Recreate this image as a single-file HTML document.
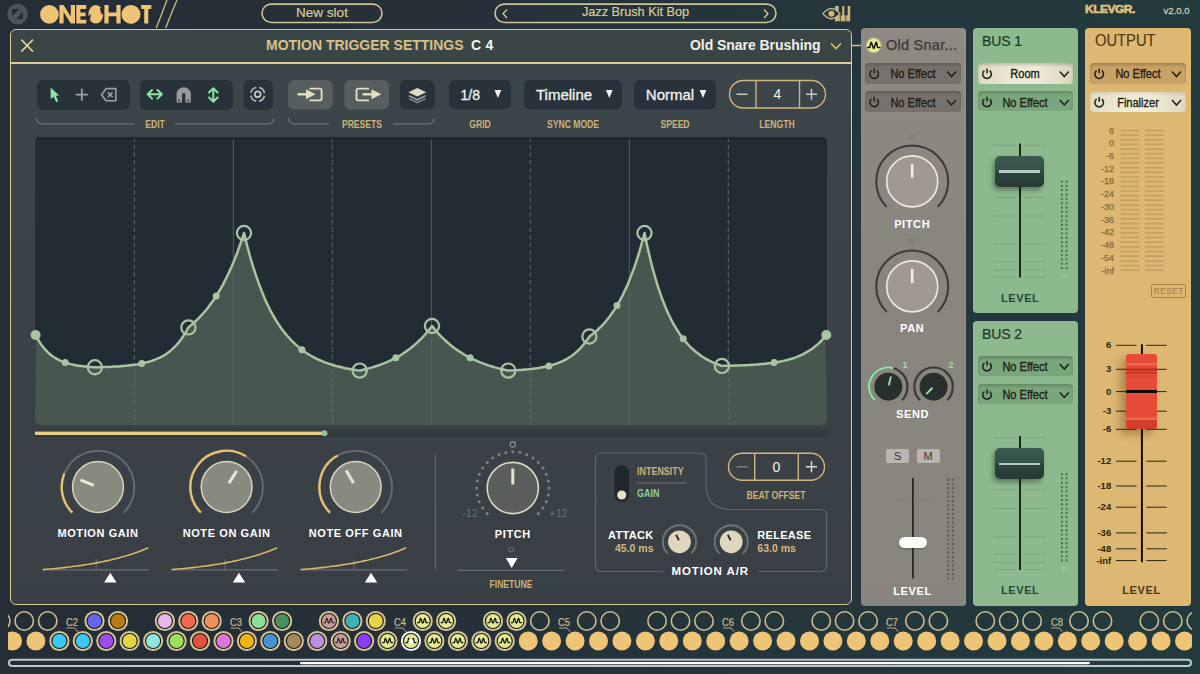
<!DOCTYPE html><html><head><meta charset="utf-8"><style>
*{margin:0;padding:0;box-sizing:border-box}
html,body{width:1200px;height:674px;overflow:hidden}
body{position:relative;font-family:"Liberation Sans", sans-serif;background:linear-gradient(90deg,#252d36 0%,#25313a 40%,#24373c 75%,#233a3d 100%)}
.a{position:absolute}
.t{position:absolute;white-space:nowrap;line-height:1}
.c{transform:translateX(-50%)}
.lbl{position:absolute;white-space:nowrap;line-height:1;font-weight:bold;font-size:11px;color:#fff;letter-spacing:0.6px;transform:translateX(-50%)}
.cond{position:absolute;white-space:nowrap;line-height:1;font-weight:bold;color:#c9b27a;transform-origin:0 0}
svg{position:absolute;left:0;top:0;overflow:visible}
</style></head><body>

<svg width="1200" height="674" style="z-index:0">
<g>
<circle cx="17.5" cy="14.1" r="10.3" fill="#4b565b"/>
<path d="M12 9 L19.6 9 L12 15.7 Z" fill="#232c32"/>
<path d="M22.9 12 L22.9 19.1 L16.1 19.1 Z" fill="#232c32"/>
</g>
<g fill="#f0c476">
<circle cx="49.4" cy="14.4" r="9.3"/>
<path d="M59.4 5 H63.6 L70.8 16.5 V5 H75 V23.6 H70.8 L63.6 12 V23.6 H59.4 Z"/>
<path d="M76.3 5 H86.3 V8.9 H80.4 V12.4 H85.6 V16.2 H80.4 V19.7 H86.3 V23.6 H76.3 Z"/>
<ellipse cx="95.8" cy="14.3" rx="7.4" ry="9.3"/>
<path d="M99.8 8.6 L104.5 7 L104.5 12.5 L101.8 15 Z" fill="#252e36"/>
<path d="M87 17.5 L91 14 L89.8 21.5 L87 22 Z" fill="#252e36"/>
<path d="M104.4 5 H108.6 V12.5 H116.4 V5 H120.6 V23.6 H116.4 V16.3 H108.6 V23.6 H104.4 Z"/>
<circle cx="131" cy="14.4" r="9.5"/>
<path d="M141.2 5 H151.3 V9 H148.3 V23.6 H144.2 V9 H141.2 Z"/>
</g>
<g stroke="#cdbf8e" stroke-width="1.3">
<line x1="156.3" y1="28" x2="167" y2="0"/>
<line x1="165.6" y1="28" x2="176.9" y2="0"/>
</g>
<rect x="262" y="4.1" width="120" height="18.4" rx="9.2" fill="none" stroke="#cfc59c" stroke-width="1.6"/>
<rect x="495" y="4.1" width="281" height="18.4" rx="9.2" fill="none" stroke="#cfc59c" stroke-width="1.6"/>
<path d="M507 9.5 L503 13.7 L507 18" fill="none" stroke="#d8cb98" stroke-width="1.3"/>
<path d="M764 9.5 L768 13.7 L764 18" fill="none" stroke="#d8cb98" stroke-width="1.3"/>
<g>
<rect x="835" y="6" width="15.2" height="15.3" fill="#cdb57c"/>
<rect x="838.6" y="6" width="3.6" height="9.4" fill="#26343a"/>
<rect x="844.3" y="6" width="3.4" height="9.4" fill="#26343a"/>
<rect x="835" y="6" width="3.4" height="3" fill="#a9b4b0"/>
<line x1="840.3" y1="15.4" x2="840.3" y2="21.3" stroke="#26343a" stroke-width="0.8"/>
<line x1="845.9" y1="15.4" x2="845.9" y2="21.3" stroke="#26343a" stroke-width="0.8"/>
<path d="M822.8 13.7 Q831.4 3.6 840 13.7 Q831.4 23.8 822.8 13.7 Z" fill="#26343a" stroke="#c8bd95" stroke-width="1.3"/>
<circle cx="831.4" cy="13.7" r="3" fill="#d9b27a"/>
</g>
</svg>
<div class="t" style="left:322px;top:5.6px;font-size:13.5px;color:#d9cb95;-webkit-text-stroke:0.2px #d9cb95;transform:translateX(-50%)">New slot</div>
<div class="t" style="left:635.5px;top:6.3px;font-size:12.7px;color:#d9cb95;-webkit-text-stroke:0.2px #d9cb95;transform:translateX(-50%)">Jazz Brush Kit Bop</div>
<div class="t" style="left:1085px;top:4px;font-size:12px;font-weight:bold;color:#e2c27f;letter-spacing:-0.5px;-webkit-text-stroke:0.6px #e2c27f;transform:scaleX(1.0) scaleY(0.85);transform-origin:left top">KLEVGR.</div>
<div class="t" style="left:1163.6px;top:5.5px;font-size:9.5px;color:#cbcab2;-webkit-text-stroke:0.3px #cbcab2">v2.0.0</div>
<div class="a" style="left:10px;top:28.6px;width:842px;height:576.9px;border:1.5px solid #d8c894;border-radius:6px;background:linear-gradient(180deg,#3a4646 0%,#3a4646 6%,#3c454a 7%,#3c4449 30%,#3b4247 60%,#393f44 100%)"></div>
<div class="a" style="left:11px;top:62px;width:840px;height:1.6px;background:#d9cb98"></div>
<div class="t" style="left:266px;top:38px;font-size:14px;font-weight:bold;color:#d8c088;letter-spacing:0px">MOTION TRIGGER SETTINGS</div>
<div class="t" style="left:471px;top:38px;font-size:14px;font-weight:bold;color:#f4f4f0;letter-spacing:0.3px">C 4</div>
<div class="t" style="left:690px;top:38px;font-size:14px;font-weight:bold;color:#f0f0ea;letter-spacing:-0.05px">Old Snare Brushing</div>
<svg width="1200" height="674"><path d="M21.3 39.6 L33 51.6 M33 39.6 L21.3 51.6" stroke="#e0cf9a" stroke-width="1.6"/><path d="M831 43.5 L836 48.5 L841 43.5" fill="none" stroke="#e2b46e" stroke-width="1.6"/><line x1="852" y1="45.5" x2="861" y2="45.5" stroke="#d6c48e" stroke-width="1.4"/><rect x="37" y="80" width="93" height="30" rx="6" fill="#28323a"/><rect x="140" y="80" width="93" height="30" rx="6" fill="#28323a"/><rect x="243.5" y="80" width="29.5" height="30" rx="6" fill="#28323a"/><rect x="288.2" y="80" width="44.6" height="29.6" rx="6" fill="#575e5f"/><rect x="344.4" y="80" width="44.6" height="29.6" rx="6" fill="#575e5f"/><rect x="400" y="80" width="34.8" height="29.6" rx="6" fill="#28323a"/><rect x="449" y="80" width="62" height="29.5" rx="6" fill="#28323a"/><rect x="524" y="80" width="98" height="29.5" rx="6" fill="#28323a"/><rect x="634" y="80" width="82" height="29.5" rx="6" fill="#28323a"/><rect x="729.5" y="80.5" width="96" height="27.5" rx="13.75" fill="none" stroke="#d0b67a" stroke-width="1.4"/><line x1="756" y1="80.5" x2="756" y2="108" stroke="#d0b67a" stroke-width="1.4"/><line x1="799.5" y1="80.5" x2="799.5" y2="108" stroke="#d0b67a" stroke-width="1.4"/><path d="M736.5 94.2 H747.5 M806 94.2 H817 M811.5 88.7 V99.7" stroke="#c8ccc8" stroke-width="1.5"/><path d="M50.6 87.4 L50.8 99.2 L53.6 96.6 L56.2 102.2 L58.3 101.2 L55.9 95.7 L59.2 95.5 Z" fill="#8fe3a0"/><path d="M75.8 94.7 H87.8 M81.8 88.7 V100.7" stroke="#9ba2a4" stroke-width="1.8"/><path d="M106 88.6 H115.8 V100.8 H106 L101.6 94.7 Z" fill="none" stroke="#9ba2a4" stroke-width="1.6" stroke-linejoin="round"/><path d="M107.8 92.3 L112.6 97.1 M112.6 92.3 L107.8 97.1" stroke="#9ba2a4" stroke-width="1.5"/><path d="M148 94.3 H161.5 M152 90 L147.7 94.3 L152 98.6 M157.5 90 L161.8 94.3 L157.5 98.6" fill="none" stroke="#8fe3a0" stroke-width="2" stroke-linejoin="round" stroke-linecap="round"/><path d="M176.6 102.4 V94.3 A7.1 7.1 0 0 1 190.8 94.3 V102.4 H185.4 V94.6 A1.7 1.7 0 0 0 182 94.6 V102.4 Z" fill="#999a98"/><rect x="178.2" y="99.6" width="1.6" height="1.6" fill="#28323a"/><rect x="187.6" y="99.6" width="1.6" height="1.6" fill="#28323a"/><path d="M213.3 88.5 V101.5 M209 92.5 L213.3 88.2 L217.6 92.5 M209 97.5 L213.3 101.8 L217.6 97.5" fill="none" stroke="#8fe3a0" stroke-width="2" stroke-linejoin="round" stroke-linecap="round"/><circle cx="257.6" cy="94.3" r="7" fill="none" stroke="#b9bdbb" stroke-width="1.6" stroke-dasharray="8 2.995" stroke-dashoffset="9.5" transform="rotate(0 257.6 94.3)"/><circle cx="257.7" cy="94.3" r="2.9" fill="none" stroke="#c4c8c4" stroke-width="1.8"/><path d="M309.5 88.6 H319.6 A2 2 0 0 1 321.6 90.6 V98.4 A2 2 0 0 1 319.6 100.4 H309.5" fill="none" stroke="#e2dec4" stroke-width="1.9"/><path d="M297.5 94.3 H308" stroke="#e2dec4" stroke-width="2.4"/><path d="M306 89.3 L315.5 94.3 L306 99.3 Z" fill="#e2dec4"/><path d="M369 88.6 H358.5 A2 2 0 0 0 356.5 90.6 V98.4 A2 2 0 0 0 358.5 100.4 H369" fill="none" stroke="#e2dec4" stroke-width="1.9"/><path d="M362.5 94.3 H373" stroke="#e2dec4" stroke-width="2.4"/><path d="M371.5 89.3 L381.3 94.3 L371.5 99.3 Z" fill="#e2dec4"/><path d="M409 98.6 L417.3 102.6 L425.6 98.6" fill="none" stroke="#7d8587" stroke-width="1.6"/><path d="M409 95.8 L417.3 99.8 L425.6 95.8" fill="none" stroke="#9aa09e" stroke-width="1.6"/><path d="M408.4 92.2 L417.3 88 L426.2 92.2 L417.3 96.4 Z" fill="#e0dbc0"/><path d="M494.5 90 H501.29999999999995 L497.9 98 Z" fill="#f2f2ee"/><path d="M605.9 90 H612.6999999999999 L609.3 98 Z" fill="#f2f2ee"/><path d="M699.6 90 H706.4 L703 98 Z" fill="#f2f2ee"/><path d="M36.5 118 Q36.5 123.8 42 123.8 H134 M175 123.8 H268 Q273.5 123.8 273.5 118" fill="none" stroke="#6a7274" stroke-width="1.2"/><path d="M288.5 118 Q288.5 123.8 294 123.8 H329 M393 123.8 H428.5 Q434 123.8 434 118" fill="none" stroke="#6a7274" stroke-width="1.2"/></svg>
<div class="t" style="left:460.5px;top:88px;font-size:14px;color:#f2f2ee;-webkit-text-stroke:0.3px #f2f2ee">1/8</div>
<div class="t" style="left:536px;top:86.5px;font-size:15px;color:#f2f2ee;-webkit-text-stroke:0.3px #f2f2ee">Timeline</div>
<div class="t" style="left:645.8px;top:86.5px;font-size:15px;color:#f2f2ee;-webkit-text-stroke:0.3px #f2f2ee">Normal</div>
<div class="t" style="left:777.5px;top:86.5px;font-size:14px;color:#f2f2ee;transform:translateX(-50%)">4</div>
<div class="t" style="left:154.5px;top:118.7px;font-size:10.5px;font-weight:bold;color:#c9b27a;transform:translateX(-50%) scaleX(0.82);transform-origin:center top">EDIT</div>
<div class="t" style="left:361.5px;top:118.7px;font-size:10.5px;font-weight:bold;color:#c9b27a;transform:translateX(-50%) scaleX(0.82);transform-origin:center top">PRESETS</div>
<div class="t" style="left:479.5px;top:118.7px;font-size:10.5px;font-weight:bold;color:#c9b27a;transform:translateX(-50%) scaleX(0.82);transform-origin:center top">GRID</div>
<div class="t" style="left:573px;top:118.7px;font-size:10.5px;font-weight:bold;color:#c9b27a;transform:translateX(-50%) scaleX(0.82);transform-origin:center top">SYNC MODE</div>
<div class="t" style="left:675px;top:118.7px;font-size:10.5px;font-weight:bold;color:#c9b27a;transform:translateX(-50%) scaleX(0.82);transform-origin:center top">SPEED</div>
<div class="t" style="left:777px;top:118.7px;font-size:10.5px;font-weight:bold;color:#c9b27a;transform:translateX(-50%) scaleX(0.82);transform-origin:center top">LENGTH</div>
<svg width="1200" height="674"><defs><clipPath id="cvclip"><rect x="35" y="137.5" width="792" height="287.5" rx="5"/></clipPath></defs><rect x="35" y="137.5" width="792" height="287.5" rx="5" fill="#222c35"/><g clip-path="url(#cvclip)"><path d="M35.6 335.0 L37.1 337.8 L38.6 340.4 L40.0 342.8 L41.5 344.9 L43.0 346.9 L44.5 348.7 L46.0 350.4 L47.5 351.9 L48.9 353.3 L50.4 354.5 L51.9 355.7 L53.4 356.8 L54.9 357.7 L56.4 358.6 L57.8 359.4 L59.3 360.2 L60.8 360.9 L62.3 361.5 L63.8 362.1 L65.2 362.6 L66.7 363.1 L68.2 363.5 L69.7 363.9 L71.2 364.3 L72.7 364.6 L74.1 364.9 L75.6 365.2 L77.1 365.5 L78.6 365.7 L80.1 365.9 L81.6 366.1 L83.0 366.3 L84.5 366.5 L86.0 366.6 L87.5 366.8 L89.0 366.9 L90.5 367.0 L91.9 367.1 L93.4 367.2 L94.9 367.3 L97.2 367.2 L99.6 367.2 L101.9 367.1 L104.2 367.0 L106.6 367.0 L108.9 366.9 L111.3 366.8 L113.6 366.6 L115.9 366.5 L118.3 366.4 L120.6 366.2 L123.0 366.0 L125.3 365.8 L127.6 365.6 L130.0 365.3 L132.3 365.0 L134.6 364.7 L137.0 364.4 L139.3 364.0 L141.7 363.5 L144.0 363.0 L146.3 362.4 L148.7 361.8 L151.0 361.1 L153.3 360.3 L155.7 359.4 L158.0 358.4 L160.4 357.3 L162.7 356.1 L165.0 354.7 L167.4 353.1 L169.7 351.4 L172.0 349.4 L174.4 347.2 L176.7 344.8 L179.1 342.0 L181.4 339.0 L183.7 335.5 L186.1 331.7 L188.4 327.4 L189.8 326.3 L191.2 325.1 L192.6 324.0 L194.0 322.7 L195.3 321.5 L196.7 320.2 L198.1 318.8 L199.5 317.4 L200.9 315.9 L202.3 314.4 L203.7 312.8 L205.1 311.2 L206.5 309.5 L207.9 307.8 L209.2 306.0 L210.6 304.1 L212.0 302.2 L213.4 300.2 L214.8 298.1 L216.2 296.0 L217.6 293.8 L219.0 291.5 L220.4 289.1 L221.8 286.6 L223.2 284.1 L224.5 281.5 L225.9 278.7 L227.3 275.9 L228.7 273.0 L230.1 269.9 L231.5 266.8 L232.9 263.5 L234.3 260.2 L235.7 256.7 L237.1 253.1 L238.4 249.3 L239.8 245.5 L241.2 241.4 L242.6 237.3 L244.0 233.0 L246.9 244.7 L249.8 255.5 L252.7 265.3 L255.6 274.4 L258.5 282.7 L261.4 290.3 L264.2 297.3 L267.1 303.7 L270.0 309.6 L272.9 315.0 L275.8 320.0 L278.7 324.5 L281.6 328.7 L284.5 332.5 L287.4 336.0 L290.3 339.2 L293.2 342.2 L296.1 344.9 L299.0 347.4 L301.9 349.7 L304.7 351.8 L307.6 353.7 L310.5 355.5 L313.4 357.1 L316.3 358.6 L319.2 360.0 L322.1 361.2 L325.0 362.4 L327.9 363.4 L330.8 364.4 L333.7 365.3 L336.6 366.1 L339.5 366.8 L342.3 367.5 L345.2 368.2 L348.1 368.7 L351.0 369.3 L353.9 369.7 L356.8 370.2 L359.7 370.6 L361.5 370.2 L363.3 369.8 L365.1 369.3 L366.9 368.9 L368.7 368.4 L370.5 367.9 L372.4 367.4 L374.2 366.8 L376.0 366.2 L377.8 365.6 L379.6 365.0 L381.4 364.3 L383.2 363.6 L385.0 362.9 L386.8 362.2 L388.6 361.4 L390.4 360.5 L392.2 359.7 L394.0 358.8 L395.9 357.8 L397.7 356.8 L399.5 355.8 L401.3 354.7 L403.1 353.5 L404.9 352.3 L406.7 351.1 L408.5 349.8 L410.3 348.4 L412.1 347.0 L413.9 345.5 L415.7 343.9 L417.5 342.2 L419.3 340.5 L421.2 338.7 L423.0 336.8 L424.8 334.9 L426.6 332.8 L428.4 330.6 L430.2 328.4 L432.0 326.0 L433.9 328.4 L435.8 330.6 L437.7 332.8 L439.6 334.9 L441.5 336.8 L443.4 338.7 L445.4 340.5 L447.3 342.2 L449.2 343.9 L451.1 345.5 L453.0 347.0 L454.9 348.4 L456.8 349.8 L458.7 351.1 L460.6 352.3 L462.5 353.5 L464.4 354.7 L466.3 355.8 L468.2 356.8 L470.1 357.8 L472.1 358.8 L474.0 359.7 L475.9 360.5 L477.8 361.4 L479.7 362.2 L481.6 362.9 L483.5 363.6 L485.4 364.3 L487.3 365.0 L489.2 365.6 L491.1 366.2 L493.0 366.8 L494.9 367.4 L496.9 367.9 L498.8 368.4 L500.7 368.9 L502.6 369.3 L504.5 369.8 L506.4 370.2 L508.3 370.6 L510.3 370.5 L512.4 370.4 L514.4 370.3 L516.4 370.2 L518.4 370.1 L520.5 369.9 L522.5 369.8 L524.5 369.6 L526.5 369.5 L528.6 369.3 L530.6 369.0 L532.6 368.8 L534.7 368.5 L536.7 368.3 L538.7 368.0 L540.7 367.6 L542.8 367.2 L544.8 366.8 L546.8 366.4 L548.9 365.9 L550.9 365.4 L552.9 364.8 L554.9 364.1 L557.0 363.4 L559.0 362.6 L561.0 361.8 L563.0 360.9 L565.1 359.8 L567.1 358.7 L569.1 357.5 L571.2 356.2 L573.2 354.7 L575.2 353.1 L577.2 351.3 L579.3 349.4 L581.3 347.2 L583.3 344.9 L585.3 342.4 L587.4 339.6 L589.4 336.5 L590.8 335.5 L592.2 334.5 L593.5 333.4 L594.9 332.2 L596.3 331.0 L597.7 329.8 L599.0 328.5 L600.4 327.2 L601.8 325.8 L603.2 324.3 L604.6 322.8 L605.9 321.2 L607.3 319.5 L608.7 317.8 L610.1 315.9 L611.4 314.0 L612.8 312.1 L614.2 310.0 L615.6 307.8 L617.0 305.6 L618.3 303.3 L619.7 300.8 L621.1 298.2 L622.5 295.6 L623.8 292.8 L625.2 289.9 L626.6 286.9 L628.0 283.7 L629.3 280.4 L630.7 276.9 L632.1 273.3 L633.5 269.6 L634.9 265.7 L636.2 261.6 L637.6 257.3 L639.0 252.9 L640.4 248.2 L641.7 243.3 L643.1 238.3 L644.5 233.0 L646.4 242.4 L648.4 251.1 L650.3 259.3 L652.2 266.9 L654.2 274.0 L656.1 280.7 L658.0 286.9 L660.0 292.7 L661.9 298.2 L663.9 303.2 L665.8 308.0 L667.7 312.4 L669.7 316.5 L671.6 320.4 L673.5 324.0 L675.5 327.4 L677.4 330.5 L679.3 333.5 L681.3 336.2 L683.2 338.8 L685.1 341.2 L687.1 343.4 L689.0 345.5 L690.9 347.5 L692.9 349.3 L694.8 351.0 L696.7 352.6 L698.7 354.1 L700.6 355.5 L702.5 356.8 L704.5 358.0 L706.4 359.1 L708.4 360.2 L710.3 361.2 L712.2 362.1 L714.2 363.0 L716.1 363.8 L718.0 364.5 L720.0 365.2 L721.9 365.9 L724.5 365.8 L727.1 365.8 L729.7 365.7 L732.3 365.7 L734.9 365.6 L737.6 365.5 L740.2 365.4 L742.8 365.3 L745.4 365.2 L748.0 365.1 L750.6 364.9 L753.2 364.7 L755.8 364.6 L758.4 364.4 L761.0 364.1 L763.7 363.9 L766.3 363.6 L768.9 363.3 L771.5 363.0 L774.1 362.6 L776.7 362.2 L779.3 361.7 L781.9 361.2 L784.5 360.6 L787.1 360.0 L789.8 359.3 L792.4 358.5 L795.0 357.6 L797.6 356.6 L800.2 355.5 L802.8 354.3 L805.4 352.9 L808.0 351.4 L810.6 349.8 L813.2 347.9 L815.9 345.8 L818.5 343.6 L821.1 341.0 L823.7 338.2 L826.3 335.0 L827 425 L35 425 Z" fill="#47564f"/><line x1="134.3" y1="137.5" x2="134.3" y2="425" stroke="#5f6b70" stroke-width="1" stroke-dasharray="4.5 3"/><line x1="233.3" y1="137.5" x2="233.3" y2="425" stroke="#5a656b" stroke-width="0.9"/><line x1="332.3" y1="137.5" x2="332.3" y2="425" stroke="#5f6b70" stroke-width="1" stroke-dasharray="4.5 3"/><line x1="431.3" y1="137.5" x2="431.3" y2="425" stroke="#5a656b" stroke-width="0.9"/><line x1="530.3" y1="137.5" x2="530.3" y2="425" stroke="#5f6b70" stroke-width="1" stroke-dasharray="4.5 3"/><line x1="629.3" y1="137.5" x2="629.3" y2="425" stroke="#5a656b" stroke-width="0.9"/><line x1="728.3" y1="137.5" x2="728.3" y2="425" stroke="#5f6b70" stroke-width="1" stroke-dasharray="4.5 3"/></g><path d="M35.6 335.0 L37.1 337.8 L38.6 340.4 L40.0 342.8 L41.5 344.9 L43.0 346.9 L44.5 348.7 L46.0 350.4 L47.5 351.9 L48.9 353.3 L50.4 354.5 L51.9 355.7 L53.4 356.8 L54.9 357.7 L56.4 358.6 L57.8 359.4 L59.3 360.2 L60.8 360.9 L62.3 361.5 L63.8 362.1 L65.2 362.6 L66.7 363.1 L68.2 363.5 L69.7 363.9 L71.2 364.3 L72.7 364.6 L74.1 364.9 L75.6 365.2 L77.1 365.5 L78.6 365.7 L80.1 365.9 L81.6 366.1 L83.0 366.3 L84.5 366.5 L86.0 366.6 L87.5 366.8 L89.0 366.9 L90.5 367.0 L91.9 367.1 L93.4 367.2 L94.9 367.3 L97.2 367.2 L99.6 367.2 L101.9 367.1 L104.2 367.0 L106.6 367.0 L108.9 366.9 L111.3 366.8 L113.6 366.6 L115.9 366.5 L118.3 366.4 L120.6 366.2 L123.0 366.0 L125.3 365.8 L127.6 365.6 L130.0 365.3 L132.3 365.0 L134.6 364.7 L137.0 364.4 L139.3 364.0 L141.7 363.5 L144.0 363.0 L146.3 362.4 L148.7 361.8 L151.0 361.1 L153.3 360.3 L155.7 359.4 L158.0 358.4 L160.4 357.3 L162.7 356.1 L165.0 354.7 L167.4 353.1 L169.7 351.4 L172.0 349.4 L174.4 347.2 L176.7 344.8 L179.1 342.0 L181.4 339.0 L183.7 335.5 L186.1 331.7 L188.4 327.4 L189.8 326.3 L191.2 325.1 L192.6 324.0 L194.0 322.7 L195.3 321.5 L196.7 320.2 L198.1 318.8 L199.5 317.4 L200.9 315.9 L202.3 314.4 L203.7 312.8 L205.1 311.2 L206.5 309.5 L207.9 307.8 L209.2 306.0 L210.6 304.1 L212.0 302.2 L213.4 300.2 L214.8 298.1 L216.2 296.0 L217.6 293.8 L219.0 291.5 L220.4 289.1 L221.8 286.6 L223.2 284.1 L224.5 281.5 L225.9 278.7 L227.3 275.9 L228.7 273.0 L230.1 269.9 L231.5 266.8 L232.9 263.5 L234.3 260.2 L235.7 256.7 L237.1 253.1 L238.4 249.3 L239.8 245.5 L241.2 241.4 L242.6 237.3 L244.0 233.0 L246.9 244.7 L249.8 255.5 L252.7 265.3 L255.6 274.4 L258.5 282.7 L261.4 290.3 L264.2 297.3 L267.1 303.7 L270.0 309.6 L272.9 315.0 L275.8 320.0 L278.7 324.5 L281.6 328.7 L284.5 332.5 L287.4 336.0 L290.3 339.2 L293.2 342.2 L296.1 344.9 L299.0 347.4 L301.9 349.7 L304.7 351.8 L307.6 353.7 L310.5 355.5 L313.4 357.1 L316.3 358.6 L319.2 360.0 L322.1 361.2 L325.0 362.4 L327.9 363.4 L330.8 364.4 L333.7 365.3 L336.6 366.1 L339.5 366.8 L342.3 367.5 L345.2 368.2 L348.1 368.7 L351.0 369.3 L353.9 369.7 L356.8 370.2 L359.7 370.6 L361.5 370.2 L363.3 369.8 L365.1 369.3 L366.9 368.9 L368.7 368.4 L370.5 367.9 L372.4 367.4 L374.2 366.8 L376.0 366.2 L377.8 365.6 L379.6 365.0 L381.4 364.3 L383.2 363.6 L385.0 362.9 L386.8 362.2 L388.6 361.4 L390.4 360.5 L392.2 359.7 L394.0 358.8 L395.9 357.8 L397.7 356.8 L399.5 355.8 L401.3 354.7 L403.1 353.5 L404.9 352.3 L406.7 351.1 L408.5 349.8 L410.3 348.4 L412.1 347.0 L413.9 345.5 L415.7 343.9 L417.5 342.2 L419.3 340.5 L421.2 338.7 L423.0 336.8 L424.8 334.9 L426.6 332.8 L428.4 330.6 L430.2 328.4 L432.0 326.0 L433.9 328.4 L435.8 330.6 L437.7 332.8 L439.6 334.9 L441.5 336.8 L443.4 338.7 L445.4 340.5 L447.3 342.2 L449.2 343.9 L451.1 345.5 L453.0 347.0 L454.9 348.4 L456.8 349.8 L458.7 351.1 L460.6 352.3 L462.5 353.5 L464.4 354.7 L466.3 355.8 L468.2 356.8 L470.1 357.8 L472.1 358.8 L474.0 359.7 L475.9 360.5 L477.8 361.4 L479.7 362.2 L481.6 362.9 L483.5 363.6 L485.4 364.3 L487.3 365.0 L489.2 365.6 L491.1 366.2 L493.0 366.8 L494.9 367.4 L496.9 367.9 L498.8 368.4 L500.7 368.9 L502.6 369.3 L504.5 369.8 L506.4 370.2 L508.3 370.6 L510.3 370.5 L512.4 370.4 L514.4 370.3 L516.4 370.2 L518.4 370.1 L520.5 369.9 L522.5 369.8 L524.5 369.6 L526.5 369.5 L528.6 369.3 L530.6 369.0 L532.6 368.8 L534.7 368.5 L536.7 368.3 L538.7 368.0 L540.7 367.6 L542.8 367.2 L544.8 366.8 L546.8 366.4 L548.9 365.9 L550.9 365.4 L552.9 364.8 L554.9 364.1 L557.0 363.4 L559.0 362.6 L561.0 361.8 L563.0 360.9 L565.1 359.8 L567.1 358.7 L569.1 357.5 L571.2 356.2 L573.2 354.7 L575.2 353.1 L577.2 351.3 L579.3 349.4 L581.3 347.2 L583.3 344.9 L585.3 342.4 L587.4 339.6 L589.4 336.5 L590.8 335.5 L592.2 334.5 L593.5 333.4 L594.9 332.2 L596.3 331.0 L597.7 329.8 L599.0 328.5 L600.4 327.2 L601.8 325.8 L603.2 324.3 L604.6 322.8 L605.9 321.2 L607.3 319.5 L608.7 317.8 L610.1 315.9 L611.4 314.0 L612.8 312.1 L614.2 310.0 L615.6 307.8 L617.0 305.6 L618.3 303.3 L619.7 300.8 L621.1 298.2 L622.5 295.6 L623.8 292.8 L625.2 289.9 L626.6 286.9 L628.0 283.7 L629.3 280.4 L630.7 276.9 L632.1 273.3 L633.5 269.6 L634.9 265.7 L636.2 261.6 L637.6 257.3 L639.0 252.9 L640.4 248.2 L641.7 243.3 L643.1 238.3 L644.5 233.0 L646.4 242.4 L648.4 251.1 L650.3 259.3 L652.2 266.9 L654.2 274.0 L656.1 280.7 L658.0 286.9 L660.0 292.7 L661.9 298.2 L663.9 303.2 L665.8 308.0 L667.7 312.4 L669.7 316.5 L671.6 320.4 L673.5 324.0 L675.5 327.4 L677.4 330.5 L679.3 333.5 L681.3 336.2 L683.2 338.8 L685.1 341.2 L687.1 343.4 L689.0 345.5 L690.9 347.5 L692.9 349.3 L694.8 351.0 L696.7 352.6 L698.7 354.1 L700.6 355.5 L702.5 356.8 L704.5 358.0 L706.4 359.1 L708.4 360.2 L710.3 361.2 L712.2 362.1 L714.2 363.0 L716.1 363.8 L718.0 364.5 L720.0 365.2 L721.9 365.9 L724.5 365.8 L727.1 365.8 L729.7 365.7 L732.3 365.7 L734.9 365.6 L737.6 365.5 L740.2 365.4 L742.8 365.3 L745.4 365.2 L748.0 365.1 L750.6 364.9 L753.2 364.7 L755.8 364.6 L758.4 364.4 L761.0 364.1 L763.7 363.9 L766.3 363.6 L768.9 363.3 L771.5 363.0 L774.1 362.6 L776.7 362.2 L779.3 361.7 L781.9 361.2 L784.5 360.6 L787.1 360.0 L789.8 359.3 L792.4 358.5 L795.0 357.6 L797.6 356.6 L800.2 355.5 L802.8 354.3 L805.4 352.9 L808.0 351.4 L810.6 349.8 L813.2 347.9 L815.9 345.8 L818.5 343.6 L821.1 341.0 L823.7 338.2 L826.3 335.0" fill="none" stroke="#a9c4a2" stroke-width="2.5" stroke-linejoin="round"/><circle cx="35.6" cy="335" r="5" fill="#a9c4a2"/><circle cx="94.9" cy="367.3" r="7.1" fill="none" stroke="#a9c4a2" stroke-width="2.2"/><circle cx="188.4" cy="327.4" r="7.1" fill="none" stroke="#a9c4a2" stroke-width="2.2"/><circle cx="244" cy="233" r="7.1" fill="none" stroke="#a9c4a2" stroke-width="2.2"/><circle cx="359.7" cy="370.6" r="7.1" fill="none" stroke="#a9c4a2" stroke-width="2.2"/><circle cx="432" cy="326" r="7.1" fill="none" stroke="#a9c4a2" stroke-width="2.2"/><circle cx="508.3" cy="370.6" r="7.1" fill="none" stroke="#a9c4a2" stroke-width="2.2"/><circle cx="589.4" cy="336.5" r="7.1" fill="none" stroke="#a9c4a2" stroke-width="2.2"/><circle cx="644.5" cy="233" r="7.1" fill="none" stroke="#a9c4a2" stroke-width="2.2"/><circle cx="721.9" cy="365.9" r="7.1" fill="none" stroke="#a9c4a2" stroke-width="2.2"/><circle cx="826.3" cy="335" r="5" fill="#a9c4a2"/><circle cx="65.2" cy="362.6" r="3.5" fill="#a9c4a2"/><circle cx="141.7" cy="363.5" r="3.5" fill="#a9c4a2"/><circle cx="216.2" cy="296" r="3.5" fill="#a9c4a2"/><circle cx="301.9" cy="349.7" r="3.5" fill="#a9c4a2"/><circle cx="395.9" cy="357.8" r="3.5" fill="#a9c4a2"/><circle cx="470.1" cy="357.8" r="3.5" fill="#a9c4a2"/><circle cx="548.9" cy="365.9" r="3.5" fill="#a9c4a2"/><circle cx="617.0" cy="305.6" r="3.5" fill="#a9c4a2"/><circle cx="683.2" cy="338.8" r="3.5" fill="#a9c4a2"/><circle cx="774.1" cy="362.6" r="3.5" fill="#a9c4a2"/><defs><linearGradient id="pbg" x1="0" y1="0" x2="0" y2="1"><stop offset="0" stop-color="#3b4548"/><stop offset="0.5" stop-color="#343c40"/><stop offset="1" stop-color="#30383c"/></linearGradient><linearGradient id="cvsh" x1="0" y1="0" x2="0" y2="1"><stop offset="0" stop-color="#141c22" stop-opacity="0.9"/><stop offset="1" stop-color="#141c22" stop-opacity="0"/></linearGradient></defs><rect x="35" y="425" width="792" height="12" fill="url(#pbg)"/><rect x="35" y="137.5" width="792" height="3" rx="1.5" fill="url(#cvsh)"/><rect x="35" y="431.6" width="289" height="3.4" fill="#e6cb82"/><circle cx="324.5" cy="433.3" r="3" fill="#94c09c"/></svg>
<div class="lbl" style="left:98px;top:528px">MOTION GAIN</div>
<div class="lbl" style="left:226.6px;top:528px">NOTE ON GAIN</div>
<div class="lbl" style="left:355.7px;top:528px">NOTE OFF GAIN</div>
<div class="t" style="left:462px;top:508px;font-size:11px;color:#69727a">-12</div>
<div class="t" style="left:549px;top:508px;font-size:11px;color:#69727a">+12</div>
<div class="lbl" style="left:512.8px;top:529px">PITCH</div>
<div class="t" style="left:510.7px;top:578.8px;font-size:10.5px;font-weight:bold;color:#c9b27a;transform:translateX(-50%) scaleX(0.82);transform-origin:center top">FINETUNE</div>
<div class="t" style="left:636.5px;top:466.7px;font-size:10px;font-weight:bold;color:#c9b27a;transform:scaleX(0.895);transform-origin:left top">INTENSITY</div>
<div class="t" style="left:636.5px;top:488.5px;font-size:10px;font-weight:bold;color:#8fd19c;transform:scaleX(0.895);transform-origin:left top">GAIN</div>
<div class="t" style="left:776.5px;top:460px;font-size:14px;color:#f2f2ee;transform:translateX(-50%)">0</div>
<div class="t" style="left:776px;top:489.6px;font-size:10.5px;font-weight:bold;color:#c9b27a;transform:translateX(-50%) scaleX(0.82);transform-origin:center top">BEAT OFFSET</div>
<div class="t" style="left:608px;top:529.5px;font-size:11px;font-weight:bold;color:#fff;letter-spacing:0.3px">ATTACK</div>
<div class="t" style="left:757.3px;top:529.5px;font-size:11px;font-weight:bold;color:#fff;letter-spacing:0.3px">RELEASE</div>
<div class="t" style="left:615px;top:542.5px;font-size:10.5px;font-weight:bold;color:#d6b97c">45.0 ms</div>
<div class="t" style="left:757.3px;top:542.5px;font-size:10.5px;font-weight:bold;color:#d6b97c">63.0 ms</div>
<div class="lbl" style="left:710.2px;top:566.3px;font-size:11.5px;letter-spacing:0.9px">MOTION A/R</div>
<svg width="1200" height="674"><path d="M72.33 512.67 A36.3 36.3 0 1 1 123.67 512.67" fill="none" stroke="#656c70" stroke-width="2"/><path d="M72.33 512.67 A36.3 36.3 0 0 1 64.34 473.40" fill="none" stroke="#e8bf6a" stroke-width="2.4"/><circle cx="98" cy="487" r="25.4" fill="#888a7f" stroke="#d8d4bf" stroke-width="1.5"/><line x1="93.83" y1="485.31" x2="80.38" y2="479.88" stroke="#e9e6d6" stroke-width="3"/><line x1="42.8" y1="569.8" x2="149.3" y2="569.8" stroke="#687074" stroke-width="1.2"/><line x1="96.19999999999999" y1="559" x2="96.19999999999999" y2="569.8" stroke="#687074" stroke-width="1"/><path d="M42.8 569.6 L46.3 569.3 L49.8 569.0 L53.3 568.7 L56.9 568.4 L60.4 568.0 L63.9 567.6 L67.4 567.2 L70.9 566.8 L74.4 566.3 L78.0 565.9 L81.5 565.4 L85.0 564.8 L88.5 564.3 L92.0 563.7 L95.5 563.1 L99.1 562.4 L102.6 561.7 L106.1 560.9 L109.6 560.2 L113.1 559.3 L116.6 558.4 L120.2 557.5 L123.7 556.5 L127.2 555.5 L130.7 554.4 L134.2 553.2 L137.8 552.0 L141.3 550.7 L144.8 549.3 L148.3 547.8" fill="none" stroke="#d8b56e" stroke-width="1.6"/><path d="M104.1 582.6 H116.5 L110.3 572.8 Z" fill="#ffffff"/><path d="M200.93 512.67 A36.3 36.3 0 1 1 252.27 512.67" fill="none" stroke="#656c70" stroke-width="2"/><path d="M200.93 512.67 A36.3 36.3 0 0 1 245.84 456.22" fill="none" stroke="#e8bf6a" stroke-width="2.4"/><circle cx="226.6" cy="487" r="25.4" fill="#888a7f" stroke="#d8d4bf" stroke-width="1.5"/><line x1="228.98" y1="483.18" x2="236.67" y2="470.89" stroke="#e9e6d6" stroke-width="3"/><line x1="171.6" y1="569.8" x2="278.1" y2="569.8" stroke="#687074" stroke-width="1.2"/><line x1="225.0" y1="559" x2="225.0" y2="569.8" stroke="#687074" stroke-width="1"/><path d="M171.6 569.6 L175.1 569.3 L178.6 569.0 L182.2 568.7 L185.7 568.4 L189.2 568.0 L192.7 567.6 L196.2 567.2 L199.7 566.8 L203.2 566.3 L206.8 565.9 L210.3 565.4 L213.8 564.8 L217.3 564.3 L220.8 563.7 L224.3 563.1 L227.9 562.4 L231.4 561.7 L234.9 560.9 L238.4 560.2 L241.9 559.3 L245.4 558.4 L249.0 557.5 L252.5 556.5 L256.0 555.5 L259.5 554.4 L263.0 553.2 L266.6 552.0 L270.1 550.7 L273.6 549.3 L277.1 547.8" fill="none" stroke="#d8b56e" stroke-width="1.6"/><path d="M232.8 582.6 H245.2 L239 572.8 Z" fill="#ffffff"/><path d="M330.03 512.67 A36.3 36.3 0 1 1 381.37 512.67" fill="none" stroke="#656c70" stroke-width="2"/><path d="M330.03 512.67 A36.3 36.3 0 0 1 337.55 455.56" fill="none" stroke="#e8bf6a" stroke-width="2.4"/><circle cx="355.7" cy="487" r="25.4" fill="#888a7f" stroke="#d8d4bf" stroke-width="1.5"/><line x1="353.45" y1="483.10" x2="346.20" y2="470.55" stroke="#e9e6d6" stroke-width="3"/><line x1="300.7" y1="569.8" x2="407.2" y2="569.8" stroke="#687074" stroke-width="1.2"/><line x1="354.09999999999997" y1="559" x2="354.09999999999997" y2="569.8" stroke="#687074" stroke-width="1"/><path d="M300.7 569.6 L304.2 569.3 L307.7 569.0 L311.2 568.7 L314.8 568.4 L318.3 568.0 L321.8 567.6 L325.3 567.2 L328.8 566.8 L332.3 566.3 L335.9 565.9 L339.4 565.4 L342.9 564.8 L346.4 564.3 L349.9 563.7 L353.4 563.1 L357.0 562.4 L360.5 561.7 L364.0 560.9 L367.5 560.2 L371.0 559.3 L374.5 558.4 L378.1 557.5 L381.6 556.5 L385.1 555.5 L388.6 554.4 L392.1 553.2 L395.6 552.0 L399.2 550.7 L402.7 549.3 L406.2 547.8" fill="none" stroke="#d8b56e" stroke-width="1.6"/><path d="M364.8 582.6 H377.2 L371 572.8 Z" fill="#ffffff"/><line x1="435.5" y1="454" x2="435.5" y2="569.5" stroke="#5f686b" stroke-width="1.2"/><circle cx="487.20" cy="513.60" r="1.5" fill="#7b8381"/><circle cx="482.70" cy="508.11" r="1.5" fill="#7b8381"/><circle cx="479.36" cy="501.85" r="1.5" fill="#7b8381"/><circle cx="477.30" cy="495.06" r="1.5" fill="#7b8381"/><circle cx="476.60" cy="488.00" r="1.5" fill="#7b8381"/><circle cx="477.30" cy="480.94" r="1.5" fill="#7b8381"/><circle cx="479.36" cy="474.15" r="1.5" fill="#7b8381"/><circle cx="482.70" cy="467.89" r="1.5" fill="#7b8381"/><circle cx="487.20" cy="462.40" r="1.5" fill="#7b8381"/><circle cx="492.69" cy="457.90" r="1.5" fill="#7b8381"/><circle cx="498.95" cy="454.56" r="1.5" fill="#7b8381"/><circle cx="505.74" cy="452.50" r="1.5" fill="#7b8381"/><circle cx="512.80" cy="451.80" r="1.5" fill="#7b8381"/><circle cx="519.86" cy="452.50" r="1.5" fill="#7b8381"/><circle cx="526.65" cy="454.56" r="1.5" fill="#7b8381"/><circle cx="532.91" cy="457.90" r="1.5" fill="#7b8381"/><circle cx="538.40" cy="462.40" r="1.5" fill="#7b8381"/><circle cx="542.90" cy="467.89" r="1.5" fill="#7b8381"/><circle cx="546.24" cy="474.15" r="1.5" fill="#7b8381"/><circle cx="548.30" cy="480.94" r="1.5" fill="#7b8381"/><circle cx="549.00" cy="488.00" r="1.5" fill="#7b8381"/><circle cx="548.30" cy="495.06" r="1.5" fill="#7b8381"/><circle cx="546.24" cy="501.85" r="1.5" fill="#7b8381"/><circle cx="542.90" cy="508.11" r="1.5" fill="#7b8381"/><circle cx="538.40" cy="513.60" r="1.5" fill="#7b8381"/><circle cx="512.8" cy="444.5" r="2.6" fill="none" stroke="#8f9795" stroke-width="1.1"/><circle cx="512.8" cy="488" r="25.6" fill="#5b5f5c" stroke="#dcd8c4" stroke-width="1.6"/><line x1="512.8" y1="468.5" x2="512.8" y2="484.5" stroke="#e6e3cf" stroke-width="3"/><circle cx="511.2" cy="549.6" r="2.4" fill="none" stroke="#5f686a" stroke-width="1.1"/><path d="M505.8 558 H517.6 L511.7 568 Z" fill="#ffffff"/><line x1="457.6" y1="570.3" x2="563.9" y2="570.3" stroke="#687074" stroke-width="1.2"/><path d="M663 571.5 H601.5 Q595.5 571.5 595.5 565.5 V459 Q595.5 453 601.5 453 H700 Q706 453 706 459 V484.5 Q706 509.5 731 509.5 H820.5 Q826.5 509.5 826.5 515.5 V565.5 Q826.5 571.5 820.5 571.5 H758.3" fill="none" stroke="#5d686b" stroke-width="1.2"/><rect x="614.4" y="465" width="14.6" height="37" rx="7.3" fill="#1f272d"/><circle cx="621.7" cy="495" r="4.6" fill="#e6e0c8"/><line x1="636" y1="483" x2="686.6" y2="483" stroke="#6a7478" stroke-width="1.1"/><rect x="728.5" y="453.3" width="96" height="27" rx="13.5" fill="none" stroke="#d0b67a" stroke-width="1.4"/><line x1="754.7" y1="453.3" x2="754.7" y2="480.3" stroke="#d0b67a" stroke-width="1.4"/><line x1="798.3" y1="453.3" x2="798.3" y2="480.3" stroke="#d0b67a" stroke-width="1.4"/><path d="M736.5 466.8 H747.5" stroke="#7b807c" stroke-width="1.5"/><path d="M806 466.8 H817 M811.5 461.3 V472.3" stroke="#dcdcd6" stroke-width="1.5"/><path d="M667.76 553.54 A16.6 16.6 0 1 1 691.24 553.54" fill="none" stroke="#6b7674" stroke-width="2"/><circle cx="679.5" cy="541.8" r="11.4" fill="#ded6bd"/><line x1="678.87" y1="540.44" x2="676.12" y2="534.55" stroke="#2a2e2c" stroke-width="2"/><path d="M719.46 553.54 A16.6 16.6 0 1 1 742.94 553.54" fill="none" stroke="#6b7674" stroke-width="2"/><circle cx="731.2" cy="541.8" r="11.4" fill="#ded6bd"/><line x1="730.57" y1="540.44" x2="727.82" y2="534.55" stroke="#2a2e2c" stroke-width="2"/></svg>
<div class="a" style="left:860.5px;top:28px;width:105px;height:577.5px;border-radius:4px;background:linear-gradient(180deg,#8e8983 0%,#89857f 40%,#88847e 100%);box-shadow:inset -1.5px 0 0 rgba(255,255,255,0.07)"></div>
<div class="a" style="left:972.5px;top:28px;width:105.5px;height:285px;border-radius:4px;background:#8cb98e;box-shadow:inset 1.5px 0 0 rgba(255,255,255,0.08)"></div>
<div class="a" style="left:972.5px;top:320.5px;width:105.5px;height:285px;border-radius:4px;background:#8cb98e;box-shadow:inset 1.5px 0 0 rgba(255,255,255,0.08)"></div>
<div class="a" style="left:1085px;top:28px;width:106px;height:577.5px;border-radius:4px;background:#ddb873"></div>
<div class="t" style="left:886px;top:38.3px;font-size:14.5px;letter-spacing:0.25px;color:#3b3937;-webkit-text-stroke:0.25px #3b3937">Old Snar...</div>
<div class="a" style="left:865px;top:63px;width:96px;height:21px;border-radius:4px;background:#77716b;box-shadow:inset 0 2px 3px rgba(0,0,0,0.18)"></div>
<div class="t" style="left:912.5px;top:68.3px;font-size:12px;color:#1e1e1c;-webkit-text-stroke:0.35px #1e1e1c;transform:translateX(-50%) scaleX(0.92);transform-origin:center top">No Effect</div>
<div class="a" style="left:865px;top:91.3px;width:96px;height:20.5px;border-radius:4px;background:#77716b;box-shadow:inset 0 2px 3px rgba(0,0,0,0.18)"></div>
<div class="t" style="left:912.5px;top:96.6px;font-size:12px;color:#1e1e1c;-webkit-text-stroke:0.35px #1e1e1c;transform:translateX(-50%) scaleX(0.92);transform-origin:center top">No Effect</div>
<div class="lbl" style="left:912.2px;top:218.5px">PITCH</div>
<div class="lbl" style="left:912.2px;top:323px">PAN</div>
<div class="t" style="left:902.5px;top:360.5px;font-size:9px;font-weight:bold;color:#93e3a8">1</div>
<div class="t" style="left:948.5px;top:360.5px;font-size:9px;font-weight:bold;color:#93e3a8">2</div>
<div class="lbl" style="left:912.5px;top:409px">SEND</div>
<div class="a" style="left:886px;top:449.3px;width:23.2px;height:14px;border-radius:2px;background:#b9b5af"></div>
<div class="a" style="left:916.6px;top:449.3px;width:23.3px;height:14px;border-radius:2px;background:#b9b5af"></div>
<div class="t" style="left:897.6px;top:451px;font-size:11px;color:#3a3836;transform:translateX(-50%)">S</div>
<div class="t" style="left:928.2px;top:451px;font-size:11px;color:#3a3836;transform:translateX(-50%)">M</div>
<div class="a" style="left:898.7px;top:536.8px;width:28.4px;height:11.5px;border-radius:6px;background:#fbfbf8;z-index:3;box-shadow:0 1px 2px rgba(0,0,0,0.25)"></div>
<div class="lbl" style="left:912.5px;top:585.5px;letter-spacing:0.6px">LEVEL</div>
<div class="t" style="left:981.5px;top:33.3px;font-size:15px;letter-spacing:-0.2px;color:#1b3a27;-webkit-text-stroke:0.2px #1b3a27;transform:scaleX(0.94);transform-origin:left top">BUS 1</div>
<div class="a" style="left:977.8px;top:63px;width:95.5px;height:20.5px;border-radius:4px;background:linear-gradient(90deg,#dcd8c0,#ece8d4 35%,#efebd8 60%,#dad6be);box-shadow:inset 0 2px 3px rgba(0,0,0,0.18)"></div>
<div class="t" style="left:1025.05px;top:68.3px;font-size:12px;color:#1e1e1c;-webkit-text-stroke:0.35px #1e1e1c;transform:translateX(-50%) scaleX(0.92);transform-origin:center top">Room</div>
<div class="a" style="left:977.8px;top:91.3px;width:95.5px;height:20.2px;border-radius:4px;background:#79a67b;box-shadow:inset 0 2px 3px rgba(0,0,0,0.18)"></div>
<div class="t" style="left:1025.05px;top:96.6px;font-size:12px;color:#1e1e1c;-webkit-text-stroke:0.35px #1e1e1c;transform:translateX(-50%) scaleX(0.92);transform-origin:center top">No Effect</div>
<div class="a" style="left:994.7px;top:155.9px;width:49.4px;height:30.7px;border-radius:5px;z-index:3;background:linear-gradient(180deg,#3c5a4f 0%,#34514a 45%,#2a443c 55%,#263c35 100%);box-shadow:-2px 3px 5px rgba(0,0,0,0.35)"></div>
<div class="a" style="left:999px;top:170.4px;width:41px;height:2.2px;background:#b7c9c0;z-index:4"></div>
<div class="lbl" style="left:1020.2px;top:292.8px;color:#234a36;letter-spacing:0.6px">LEVEL</div>
<div class="t" style="left:981.5px;top:325.8px;font-size:15px;letter-spacing:-0.2px;color:#1b3a27;-webkit-text-stroke:0.2px #1b3a27;transform:scaleX(0.94);transform-origin:left top">BUS 2</div>
<div class="a" style="left:977.8px;top:355.5px;width:95.5px;height:20.5px;border-radius:4px;background:#79a67b;box-shadow:inset 0 2px 3px rgba(0,0,0,0.18)"></div>
<div class="t" style="left:1025.05px;top:360.8px;font-size:12px;color:#1e1e1c;-webkit-text-stroke:0.35px #1e1e1c;transform:translateX(-50%) scaleX(0.92);transform-origin:center top">No Effect</div>
<div class="a" style="left:977.8px;top:383.8px;width:95.5px;height:20.2px;border-radius:4px;background:#79a67b;box-shadow:inset 0 2px 3px rgba(0,0,0,0.18)"></div>
<div class="t" style="left:1025.05px;top:389.1px;font-size:12px;color:#1e1e1c;-webkit-text-stroke:0.35px #1e1e1c;transform:translateX(-50%) scaleX(0.92);transform-origin:center top">No Effect</div>
<div class="a" style="left:994.7px;top:448.4px;width:49.4px;height:30.7px;border-radius:5px;z-index:3;background:linear-gradient(180deg,#3c5a4f 0%,#34514a 45%,#2a443c 55%,#263c35 100%);box-shadow:-2px 3px 5px rgba(0,0,0,0.35)"></div>
<div class="a" style="left:999px;top:462.9px;width:41px;height:2.2px;background:#b7c9c0;z-index:4"></div>
<div class="lbl" style="left:1020.2px;top:585.3px;color:#234a36;letter-spacing:0.6px">LEVEL</div>
<div class="t" style="left:1095px;top:32.6px;font-size:16px;color:#553c16;-webkit-text-stroke:0.2px #553c16;transform:scaleX(0.92);transform-origin:left top">OUTPUT</div>
<div class="a" style="left:1090px;top:63px;width:96px;height:21px;border-radius:4px;background:#c7a266;box-shadow:inset 0 2px 3px rgba(0,0,0,0.2)"></div>
<div class="t" style="left:1137.5px;top:68.3px;font-size:12px;color:#241d10;-webkit-text-stroke:0.35px #241d10;transform:translateX(-50%) scaleX(0.92);transform-origin:center top">No Effect</div>
<div class="a" style="left:1090px;top:91.5px;width:96px;height:20.5px;border-radius:4px;background:linear-gradient(90deg,#e0dcc4,#eeead6 35%,#f0ecd8 60%,#dcd8c0);box-shadow:inset 0 2px 3px rgba(0,0,0,0.08)"></div>
<div class="t" style="left:1137.5px;top:96.8px;font-size:12px;color:#241d10;-webkit-text-stroke:0.35px #241d10;transform:translateX(-50%) scaleX(0.92);transform-origin:center top">Finalizer</div>
<div class="t" style="left:1114px;top:126.5px;font-size:9px;color:#866838;-webkit-text-stroke:0.25px #866838;transform:translateX(-100%)">6</div>
<div class="t" style="left:1114px;top:139.2px;font-size:9px;color:#866838;-webkit-text-stroke:0.25px #866838;transform:translateX(-100%)">0</div>
<div class="t" style="left:1114px;top:152.0px;font-size:9px;color:#866838;-webkit-text-stroke:0.25px #866838;transform:translateX(-100%)">-6</div>
<div class="t" style="left:1114px;top:164.7px;font-size:9px;color:#866838;-webkit-text-stroke:0.25px #866838;transform:translateX(-100%)">-12</div>
<div class="t" style="left:1114px;top:177.4px;font-size:9px;color:#866838;-webkit-text-stroke:0.25px #866838;transform:translateX(-100%)">-18</div>
<div class="t" style="left:1114px;top:190.2px;font-size:9px;color:#866838;-webkit-text-stroke:0.25px #866838;transform:translateX(-100%)">-24</div>
<div class="t" style="left:1114px;top:202.9px;font-size:9px;color:#866838;-webkit-text-stroke:0.25px #866838;transform:translateX(-100%)">-30</div>
<div class="t" style="left:1114px;top:215.6px;font-size:9px;color:#866838;-webkit-text-stroke:0.25px #866838;transform:translateX(-100%)">-36</div>
<div class="t" style="left:1114px;top:228.3px;font-size:9px;color:#866838;-webkit-text-stroke:0.25px #866838;transform:translateX(-100%)">-42</div>
<div class="t" style="left:1114px;top:241.1px;font-size:9px;color:#866838;-webkit-text-stroke:0.25px #866838;transform:translateX(-100%)">-48</div>
<div class="t" style="left:1114px;top:253.8px;font-size:9px;color:#866838;-webkit-text-stroke:0.25px #866838;transform:translateX(-100%)">-54</div>
<div class="t" style="left:1114px;top:266.5px;font-size:9px;color:#866838;-webkit-text-stroke:0.25px #866838;transform:translateX(-100%)">-inf</div>
<div class="a" style="left:1151.3px;top:283.7px;width:34.4px;height:14px;border:1px solid #a48450;border-radius:2px"></div>
<div class="t" style="left:1168.5px;top:286.5px;font-size:9px;color:#9c7c48;transform:translateX(-50%)">RESET</div>
<div class="t" style="left:1111.2px;top:340.3px;font-size:9.5px;font-weight:bold;color:#2b2312;transform:translateX(-100%)">6</div>
<div class="t" style="left:1111.2px;top:364.3px;font-size:9.5px;font-weight:bold;color:#2b2312;transform:translateX(-100%)">3</div>
<div class="t" style="left:1111.2px;top:386.6px;font-size:9.5px;font-weight:bold;color:#2b2312;transform:translateX(-100%)">0</div>
<div class="t" style="left:1111.2px;top:406.2px;font-size:9.5px;font-weight:bold;color:#2b2312;transform:translateX(-100%)">-3</div>
<div class="t" style="left:1111.2px;top:424.3px;font-size:9.5px;font-weight:bold;color:#2b2312;transform:translateX(-100%)">-6</div>
<div class="t" style="left:1111.2px;top:456.2px;font-size:9.5px;font-weight:bold;color:#2b2312;transform:translateX(-100%)">-12</div>
<div class="t" style="left:1111.2px;top:481.0px;font-size:9.5px;font-weight:bold;color:#2b2312;transform:translateX(-100%)">-18</div>
<div class="t" style="left:1111.2px;top:502.2px;font-size:9.5px;font-weight:bold;color:#2b2312;transform:translateX(-100%)">-24</div>
<div class="t" style="left:1111.2px;top:527.9px;font-size:9.5px;font-weight:bold;color:#2b2312;transform:translateX(-100%)">-36</div>
<div class="t" style="left:1111.2px;top:543.8px;font-size:9.5px;font-weight:bold;color:#2b2312;transform:translateX(-100%)">-48</div>
<div class="t" style="left:1111.2px;top:555.6px;font-size:9.5px;font-weight:bold;color:#2b2312;transform:translateX(-100%)">-inf</div>
<div class="a" style="left:1125.9px;top:354.2px;width:30.7px;height:75.1px;border-radius:3px;z-index:3;background:linear-gradient(180deg,#e54b35 0%,#e64c36 11.5%,#ee6a52 12%,#ec654e 15%,#e44a34 15.5%,#e44a34 19%,#c03325 19.5%,#c03325 22%,#e44a34 22.5%,#e44a34 24%,#c73828 24.5%,#c73828 26%,#e54b36 26.5%,#e04833 33%,#e64c37 34%,#e54b36 60%,#e54c37 84.5%,#ee6a52 85%,#ec6750 88%,#d23f2f 88.5%,#cf3d2d 100%);box-shadow:-5px 5px 8px rgba(60,40,10,0.35)"></div>
<div class="a" style="left:1125.9px;top:390px;width:30.7px;height:3.4px;background:#0d0a08;z-index:4"></div>
<div class="lbl" style="left:1141.5px;top:585px;color:#4a3a1a;letter-spacing:0.6px">LEVEL</div>
<svg width="1200" height="674"><circle cx="873.7" cy="45.3" r="8.2" fill="#e3ea8e" opacity="0.35"/><circle cx="873.7" cy="45.3" r="6.9" fill="#e6ee90"/><path d="M867.70 47.50 L869.70 47.50 C870.30 47.50 870.30 42.30 871.10 42.30 C872.10 42.30 872.70 48.50 873.70 48.50 C874.70 48.50 875.30 42.30 876.30 42.30 C877.10 42.30 877.10 47.50 877.70 47.50 L879.70 47.50" fill="none" stroke="#1a1a12" stroke-width="1.6" stroke-linejoin="round" stroke-linecap="round"/><path d="M871.6 70.7 A4.3 4.3 0 1 0 876.8 70.7" fill="none" stroke="#1e1e1c" stroke-width="1.5"/><line x1="874.2" y1="68.4" x2="874.2" y2="73.2" stroke="#1e1e1c" stroke-width="1.5"/><path d="M947 71.6 L951.5 76.6 L956 71.6" fill="none" stroke="#1e1e1c" stroke-width="1.5"/><path d="M871.6 99.0 A4.3 4.3 0 1 0 876.8 99.0" fill="none" stroke="#1e1e1c" stroke-width="1.5"/><line x1="874.2" y1="96.7" x2="874.2" y2="101.5" stroke="#1e1e1c" stroke-width="1.5"/><path d="M947 99.89999999999999 L951.5 104.89999999999999 L956 99.89999999999999" fill="none" stroke="#1e1e1c" stroke-width="1.5"/><path d="M886.7 206.9 A36 36 0 1 1 937.7 206.9" fill="none" stroke="#3d3a37" stroke-width="2"/><circle cx="912.2" cy="181.4" r="25.5" fill="#a09990" stroke="#efeadb" stroke-width="1.6"/><line x1="912.2" y1="163.9" x2="912.2" y2="177.9" stroke="#f1ede0" stroke-width="2.6"/><circle cx="911.6" cy="136.3" r="2.3" fill="none" stroke="#7b756f" stroke-width="1"/><path d="M886.7 311.9 A36 36 0 1 1 937.7 311.9" fill="none" stroke="#3d3a37" stroke-width="2"/><circle cx="912.2" cy="286.4" r="25.5" fill="#a09990" stroke="#efeadb" stroke-width="1.6"/><line x1="912.2" y1="268.9" x2="912.2" y2="282.9" stroke="#f1ede0" stroke-width="2.6"/><circle cx="911.6" cy="241.7" r="2.3" fill="none" stroke="#7b756f" stroke-width="1"/><path d="M874.72 400.28 A19.2 19.2 0 1 1 901.88 400.28" fill="none" stroke="#3d3a37" stroke-width="2.2"/><path d="M874.72 400.28 A19.2 19.2 0 0 1 893.27 368.15" fill="none" stroke="#93e3a8" stroke-width="2.2"/><circle cx="888.3" cy="386.7" r="14" fill="#28302d"/><line x1="888.69" y1="385.25" x2="891.02" y2="376.56" stroke="#9fe6b0" stroke-width="1.8"/><path d="M920.02 400.28 A19.2 19.2 0 1 1 947.18 400.28" fill="none" stroke="#3d3a37" stroke-width="2.2"/><circle cx="933.6" cy="386.7" r="14" fill="#28302d"/><line x1="932.54" y1="387.76" x2="926.18" y2="394.12" stroke="#9fe6b0" stroke-width="1.8"/><line x1="896" y1="500" x2="907" y2="500" stroke="#7e7872" stroke-width="1"/><line x1="919" y1="500" x2="931" y2="500" stroke="#7e7872" stroke-width="1"/><line x1="912.9" y1="478" x2="912.9" y2="578.5" stroke="#2b2927" stroke-width="1.8"/><rect x="947.2" y="478.5" width="2" height="2" fill="#5e5a55"/><rect x="947.2" y="482.8" width="2" height="2" fill="#5e5a55"/><rect x="947.2" y="487.1" width="2" height="2" fill="#5e5a55"/><rect x="947.2" y="491.4" width="2" height="2" fill="#5e5a55"/><rect x="947.2" y="495.7" width="2" height="2" fill="#5e5a55"/><rect x="947.2" y="500.0" width="2" height="2" fill="#5e5a55"/><rect x="947.2" y="504.3" width="2" height="2" fill="#5e5a55"/><rect x="947.2" y="508.6" width="2" height="2" fill="#5e5a55"/><rect x="947.2" y="512.9" width="2" height="2" fill="#5e5a55"/><rect x="947.2" y="517.2" width="2" height="2" fill="#5e5a55"/><rect x="947.2" y="521.5" width="2" height="2" fill="#5e5a55"/><rect x="947.2" y="525.8" width="2" height="2" fill="#5e5a55"/><rect x="947.2" y="530.1" width="2" height="2" fill="#5e5a55"/><rect x="947.2" y="534.4" width="2" height="2" fill="#5e5a55"/><rect x="947.2" y="538.7" width="2" height="2" fill="#5e5a55"/><rect x="947.2" y="543.0" width="2" height="2" fill="#5e5a55"/><rect x="947.2" y="547.3" width="2" height="2" fill="#5e5a55"/><rect x="947.2" y="551.6" width="2" height="2" fill="#5e5a55"/><rect x="947.2" y="555.9" width="2" height="2" fill="#5e5a55"/><rect x="947.2" y="560.2" width="2" height="2" fill="#5e5a55"/><rect x="947.2" y="564.5" width="2" height="2" fill="#5e5a55"/><rect x="947.2" y="568.8" width="2" height="2" fill="#5e5a55"/><rect x="947.2" y="573.1" width="2" height="2" fill="#5e5a55"/><rect x="947.2" y="577.4" width="2" height="2" fill="#5e5a55"/><rect x="951.8" y="478.5" width="2" height="2" fill="#5e5a55"/><rect x="951.8" y="482.8" width="2" height="2" fill="#5e5a55"/><rect x="951.8" y="487.1" width="2" height="2" fill="#5e5a55"/><rect x="951.8" y="491.4" width="2" height="2" fill="#5e5a55"/><rect x="951.8" y="495.7" width="2" height="2" fill="#5e5a55"/><rect x="951.8" y="500.0" width="2" height="2" fill="#5e5a55"/><rect x="951.8" y="504.3" width="2" height="2" fill="#5e5a55"/><rect x="951.8" y="508.6" width="2" height="2" fill="#5e5a55"/><rect x="951.8" y="512.9" width="2" height="2" fill="#5e5a55"/><rect x="951.8" y="517.2" width="2" height="2" fill="#5e5a55"/><rect x="951.8" y="521.5" width="2" height="2" fill="#5e5a55"/><rect x="951.8" y="525.8" width="2" height="2" fill="#5e5a55"/><rect x="951.8" y="530.1" width="2" height="2" fill="#5e5a55"/><rect x="951.8" y="534.4" width="2" height="2" fill="#5e5a55"/><rect x="951.8" y="538.7" width="2" height="2" fill="#5e5a55"/><rect x="951.8" y="543.0" width="2" height="2" fill="#5e5a55"/><rect x="951.8" y="547.3" width="2" height="2" fill="#5e5a55"/><rect x="951.8" y="551.6" width="2" height="2" fill="#5e5a55"/><rect x="951.8" y="555.9" width="2" height="2" fill="#5e5a55"/><rect x="951.8" y="560.2" width="2" height="2" fill="#5e5a55"/><rect x="951.8" y="564.5" width="2" height="2" fill="#5e5a55"/><rect x="951.8" y="568.8" width="2" height="2" fill="#5e5a55"/><rect x="951.8" y="573.1" width="2" height="2" fill="#5e5a55"/><rect x="951.8" y="577.4" width="2" height="2" fill="#5e5a55"/><path d="M984.4 70.7 A4.3 4.3 0 1 0 989.6 70.7" fill="none" stroke="#1e1e1c" stroke-width="1.5"/><line x1="987.0" y1="68.4" x2="987.0" y2="73.2" stroke="#1e1e1c" stroke-width="1.5"/><path d="M1059.8 71.6 L1064.3 76.6 L1068.8 71.6" fill="none" stroke="#1e1e1c" stroke-width="1.5"/><path d="M984.4 99.0 A4.3 4.3 0 1 0 989.6 99.0" fill="none" stroke="#1e1e1c" stroke-width="1.5"/><line x1="987.0" y1="96.7" x2="987.0" y2="101.5" stroke="#1e1e1c" stroke-width="1.5"/><path d="M1059.8 99.89999999999999 L1064.3 104.89999999999999 L1068.8 99.89999999999999" fill="none" stroke="#1e1e1c" stroke-width="1.5"/><line x1="993.4" y1="145.2" x2="1016" y2="145.2" stroke="#79a77b" stroke-width="1"/><line x1="1024" y1="145.2" x2="1045.4" y2="145.2" stroke="#79a77b" stroke-width="1"/><line x1="993.4" y1="197.3" x2="1016" y2="197.3" stroke="#79a77b" stroke-width="1"/><line x1="1024" y1="197.3" x2="1045.4" y2="197.3" stroke="#79a77b" stroke-width="1"/><line x1="993.4" y1="216" x2="1016" y2="216" stroke="#79a77b" stroke-width="1"/><line x1="1024" y1="216" x2="1045.4" y2="216" stroke="#79a77b" stroke-width="1"/><line x1="993.4" y1="244.3" x2="1016" y2="244.3" stroke="#79a77b" stroke-width="1"/><line x1="1024" y1="244.3" x2="1045.4" y2="244.3" stroke="#79a77b" stroke-width="1"/><line x1="993.4" y1="261.4" x2="1016" y2="261.4" stroke="#79a77b" stroke-width="1"/><line x1="1024" y1="261.4" x2="1045.4" y2="261.4" stroke="#79a77b" stroke-width="1"/><line x1="993.4" y1="270.2" x2="1016" y2="270.2" stroke="#79a77b" stroke-width="1"/><line x1="1024" y1="270.2" x2="1045.4" y2="270.2" stroke="#79a77b" stroke-width="1"/><line x1="993.4" y1="276.9" x2="1016" y2="276.9" stroke="#79a77b" stroke-width="1"/><line x1="1024" y1="276.9" x2="1045.4" y2="276.9" stroke="#79a77b" stroke-width="1"/><line x1="1020" y1="143.4" x2="1020" y2="277.4" stroke="#101412" stroke-width="1.8"/><rect x="1060.9" y="180.6" width="2" height="2" fill="#457552"/><rect x="1060.9" y="184.9" width="2" height="2" fill="#457552"/><rect x="1060.9" y="189.2" width="2" height="2" fill="#457552"/><rect x="1060.9" y="193.6" width="2" height="2" fill="#457552"/><rect x="1060.9" y="197.9" width="2" height="2" fill="#457552"/><rect x="1060.9" y="202.2" width="2" height="2" fill="#457552"/><rect x="1060.9" y="206.5" width="2" height="2" fill="#457552"/><rect x="1060.9" y="210.8" width="2" height="2" fill="#457552"/><rect x="1060.9" y="215.2" width="2" height="2" fill="#457552"/><rect x="1060.9" y="219.5" width="2" height="2" fill="#457552"/><rect x="1060.9" y="223.8" width="2" height="2" fill="#457552"/><rect x="1060.9" y="228.1" width="2" height="2" fill="#457552"/><rect x="1060.9" y="232.4" width="2" height="2" fill="#457552"/><rect x="1060.9" y="236.8" width="2" height="2" fill="#457552"/><rect x="1060.9" y="241.1" width="2" height="2" fill="#457552"/><rect x="1060.9" y="245.4" width="2" height="2" fill="#457552"/><rect x="1060.9" y="249.7" width="2" height="2" fill="#457552"/><rect x="1060.9" y="254.0" width="2" height="2" fill="#457552"/><rect x="1060.9" y="258.4" width="2" height="2" fill="#457552"/><rect x="1060.9" y="262.7" width="2" height="2" fill="#457552"/><rect x="1060.9" y="267.0" width="2" height="2" fill="#457552"/><rect x="1065.6" y="180.6" width="2" height="2" fill="#457552"/><rect x="1065.6" y="184.9" width="2" height="2" fill="#457552"/><rect x="1065.6" y="189.2" width="2" height="2" fill="#457552"/><rect x="1065.6" y="193.6" width="2" height="2" fill="#457552"/><rect x="1065.6" y="197.9" width="2" height="2" fill="#457552"/><rect x="1065.6" y="202.2" width="2" height="2" fill="#457552"/><rect x="1065.6" y="206.5" width="2" height="2" fill="#457552"/><rect x="1065.6" y="210.8" width="2" height="2" fill="#457552"/><rect x="1065.6" y="215.2" width="2" height="2" fill="#457552"/><rect x="1065.6" y="219.5" width="2" height="2" fill="#457552"/><rect x="1065.6" y="223.8" width="2" height="2" fill="#457552"/><rect x="1065.6" y="228.1" width="2" height="2" fill="#457552"/><rect x="1065.6" y="232.4" width="2" height="2" fill="#457552"/><rect x="1065.6" y="236.8" width="2" height="2" fill="#457552"/><rect x="1065.6" y="241.1" width="2" height="2" fill="#457552"/><rect x="1065.6" y="245.4" width="2" height="2" fill="#457552"/><rect x="1065.6" y="249.7" width="2" height="2" fill="#457552"/><rect x="1065.6" y="254.0" width="2" height="2" fill="#457552"/><rect x="1065.6" y="258.4" width="2" height="2" fill="#457552"/><rect x="1065.6" y="262.7" width="2" height="2" fill="#457552"/><rect x="1065.6" y="267.0" width="2" height="2" fill="#457552"/><rect x="1061.2" y="274.5" width="6.5" height="3" fill="#8fd49a" opacity="0.6"/><path d="M984.4 363.2 A4.3 4.3 0 1 0 989.6 363.2" fill="none" stroke="#1e1e1c" stroke-width="1.5"/><line x1="987.0" y1="360.9" x2="987.0" y2="365.7" stroke="#1e1e1c" stroke-width="1.5"/><path d="M1059.8 364.1 L1064.3 369.1 L1068.8 364.1" fill="none" stroke="#1e1e1c" stroke-width="1.5"/><path d="M984.4 391.5 A4.3 4.3 0 1 0 989.6 391.5" fill="none" stroke="#1e1e1c" stroke-width="1.5"/><line x1="987.0" y1="389.2" x2="987.0" y2="394.0" stroke="#1e1e1c" stroke-width="1.5"/><path d="M1059.8 392.40000000000003 L1064.3 397.40000000000003 L1068.8 392.40000000000003" fill="none" stroke="#1e1e1c" stroke-width="1.5"/><line x1="993.4" y1="437.7" x2="1016" y2="437.7" stroke="#79a77b" stroke-width="1"/><line x1="1024" y1="437.7" x2="1045.4" y2="437.7" stroke="#79a77b" stroke-width="1"/><line x1="993.4" y1="489.8" x2="1016" y2="489.8" stroke="#79a77b" stroke-width="1"/><line x1="1024" y1="489.8" x2="1045.4" y2="489.8" stroke="#79a77b" stroke-width="1"/><line x1="993.4" y1="508.5" x2="1016" y2="508.5" stroke="#79a77b" stroke-width="1"/><line x1="1024" y1="508.5" x2="1045.4" y2="508.5" stroke="#79a77b" stroke-width="1"/><line x1="993.4" y1="536.8" x2="1016" y2="536.8" stroke="#79a77b" stroke-width="1"/><line x1="1024" y1="536.8" x2="1045.4" y2="536.8" stroke="#79a77b" stroke-width="1"/><line x1="993.4" y1="553.9" x2="1016" y2="553.9" stroke="#79a77b" stroke-width="1"/><line x1="1024" y1="553.9" x2="1045.4" y2="553.9" stroke="#79a77b" stroke-width="1"/><line x1="993.4" y1="562.7" x2="1016" y2="562.7" stroke="#79a77b" stroke-width="1"/><line x1="1024" y1="562.7" x2="1045.4" y2="562.7" stroke="#79a77b" stroke-width="1"/><line x1="993.4" y1="569.4" x2="1016" y2="569.4" stroke="#79a77b" stroke-width="1"/><line x1="1024" y1="569.4" x2="1045.4" y2="569.4" stroke="#79a77b" stroke-width="1"/><line x1="1020" y1="435.9" x2="1020" y2="569.9" stroke="#101412" stroke-width="1.8"/><rect x="1060.9" y="473.1" width="2" height="2" fill="#457552"/><rect x="1060.9" y="477.4" width="2" height="2" fill="#457552"/><rect x="1060.9" y="481.7" width="2" height="2" fill="#457552"/><rect x="1060.9" y="486.1" width="2" height="2" fill="#457552"/><rect x="1060.9" y="490.4" width="2" height="2" fill="#457552"/><rect x="1060.9" y="494.7" width="2" height="2" fill="#457552"/><rect x="1060.9" y="499.0" width="2" height="2" fill="#457552"/><rect x="1060.9" y="503.3" width="2" height="2" fill="#457552"/><rect x="1060.9" y="507.7" width="2" height="2" fill="#457552"/><rect x="1060.9" y="512.0" width="2" height="2" fill="#457552"/><rect x="1060.9" y="516.3" width="2" height="2" fill="#457552"/><rect x="1060.9" y="520.6" width="2" height="2" fill="#457552"/><rect x="1060.9" y="524.9" width="2" height="2" fill="#457552"/><rect x="1060.9" y="529.3" width="2" height="2" fill="#457552"/><rect x="1060.9" y="533.6" width="2" height="2" fill="#457552"/><rect x="1060.9" y="537.9" width="2" height="2" fill="#457552"/><rect x="1060.9" y="542.2" width="2" height="2" fill="#457552"/><rect x="1060.9" y="546.5" width="2" height="2" fill="#457552"/><rect x="1060.9" y="550.9" width="2" height="2" fill="#457552"/><rect x="1060.9" y="555.2" width="2" height="2" fill="#457552"/><rect x="1060.9" y="559.5" width="2" height="2" fill="#457552"/><rect x="1065.6" y="473.1" width="2" height="2" fill="#457552"/><rect x="1065.6" y="477.4" width="2" height="2" fill="#457552"/><rect x="1065.6" y="481.7" width="2" height="2" fill="#457552"/><rect x="1065.6" y="486.1" width="2" height="2" fill="#457552"/><rect x="1065.6" y="490.4" width="2" height="2" fill="#457552"/><rect x="1065.6" y="494.7" width="2" height="2" fill="#457552"/><rect x="1065.6" y="499.0" width="2" height="2" fill="#457552"/><rect x="1065.6" y="503.3" width="2" height="2" fill="#457552"/><rect x="1065.6" y="507.7" width="2" height="2" fill="#457552"/><rect x="1065.6" y="512.0" width="2" height="2" fill="#457552"/><rect x="1065.6" y="516.3" width="2" height="2" fill="#457552"/><rect x="1065.6" y="520.6" width="2" height="2" fill="#457552"/><rect x="1065.6" y="524.9" width="2" height="2" fill="#457552"/><rect x="1065.6" y="529.3" width="2" height="2" fill="#457552"/><rect x="1065.6" y="533.6" width="2" height="2" fill="#457552"/><rect x="1065.6" y="537.9" width="2" height="2" fill="#457552"/><rect x="1065.6" y="542.2" width="2" height="2" fill="#457552"/><rect x="1065.6" y="546.5" width="2" height="2" fill="#457552"/><rect x="1065.6" y="550.9" width="2" height="2" fill="#457552"/><rect x="1065.6" y="555.2" width="2" height="2" fill="#457552"/><rect x="1065.6" y="559.5" width="2" height="2" fill="#457552"/><rect x="1061.2" y="567.0" width="6.5" height="3" fill="#8fd49a" opacity="0.6"/><path d="M1096.6 70.7 A4.3 4.3 0 1 0 1101.8 70.7" fill="none" stroke="#241d10" stroke-width="1.5"/><line x1="1099.2" y1="68.4" x2="1099.2" y2="73.2" stroke="#241d10" stroke-width="1.5"/><path d="M1172 71.6 L1176.5 76.6 L1181 71.6" fill="none" stroke="#241d10" stroke-width="1.5"/><path d="M1096.6 99.2 A4.3 4.3 0 1 0 1101.8 99.2" fill="none" stroke="#241d10" stroke-width="1.5"/><line x1="1099.2" y1="96.9" x2="1099.2" y2="101.7" stroke="#241d10" stroke-width="1.5"/><path d="M1172 100.1 L1176.5 105.1 L1181 100.1" fill="none" stroke="#241d10" stroke-width="1.5"/><rect x="1120.3" y="129.5" width="19" height="1.8" fill="#c4a265"/><rect x="1144.8" y="129.5" width="19.2" height="1.8" fill="#c4a265"/><rect x="1120.3" y="134.2" width="19" height="1.8" fill="#c4a265"/><rect x="1144.8" y="134.2" width="19.2" height="1.8" fill="#c4a265"/><rect x="1120.3" y="138.8" width="19" height="1.8" fill="#c4a265"/><rect x="1144.8" y="138.8" width="19.2" height="1.8" fill="#c4a265"/><rect x="1120.3" y="143.5" width="19" height="1.8" fill="#c4a265"/><rect x="1144.8" y="143.5" width="19.2" height="1.8" fill="#c4a265"/><rect x="1120.3" y="148.1" width="19" height="1.8" fill="#c4a265"/><rect x="1144.8" y="148.1" width="19.2" height="1.8" fill="#c4a265"/><rect x="1120.3" y="152.8" width="19" height="1.8" fill="#c4a265"/><rect x="1144.8" y="152.8" width="19.2" height="1.8" fill="#c4a265"/><rect x="1120.3" y="157.5" width="19" height="1.8" fill="#c4a265"/><rect x="1144.8" y="157.5" width="19.2" height="1.8" fill="#c4a265"/><rect x="1120.3" y="162.1" width="19" height="1.8" fill="#c4a265"/><rect x="1144.8" y="162.1" width="19.2" height="1.8" fill="#c4a265"/><rect x="1120.3" y="166.8" width="19" height="1.8" fill="#c4a265"/><rect x="1144.8" y="166.8" width="19.2" height="1.8" fill="#c4a265"/><rect x="1120.3" y="171.4" width="19" height="1.8" fill="#c4a265"/><rect x="1144.8" y="171.4" width="19.2" height="1.8" fill="#c4a265"/><rect x="1120.3" y="176.1" width="19" height="1.8" fill="#c4a265"/><rect x="1144.8" y="176.1" width="19.2" height="1.8" fill="#c4a265"/><rect x="1120.3" y="180.8" width="19" height="1.8" fill="#c4a265"/><rect x="1144.8" y="180.8" width="19.2" height="1.8" fill="#c4a265"/><rect x="1120.3" y="185.4" width="19" height="1.8" fill="#c4a265"/><rect x="1144.8" y="185.4" width="19.2" height="1.8" fill="#c4a265"/><rect x="1120.3" y="190.1" width="19" height="1.8" fill="#c4a265"/><rect x="1144.8" y="190.1" width="19.2" height="1.8" fill="#c4a265"/><rect x="1120.3" y="194.7" width="19" height="1.8" fill="#c4a265"/><rect x="1144.8" y="194.7" width="19.2" height="1.8" fill="#c4a265"/><rect x="1120.3" y="199.4" width="19" height="1.8" fill="#c4a265"/><rect x="1144.8" y="199.4" width="19.2" height="1.8" fill="#c4a265"/><rect x="1120.3" y="204.1" width="19" height="1.8" fill="#c4a265"/><rect x="1144.8" y="204.1" width="19.2" height="1.8" fill="#c4a265"/><rect x="1120.3" y="208.7" width="19" height="1.8" fill="#c4a265"/><rect x="1144.8" y="208.7" width="19.2" height="1.8" fill="#c4a265"/><rect x="1120.3" y="213.4" width="19" height="1.8" fill="#c4a265"/><rect x="1144.8" y="213.4" width="19.2" height="1.8" fill="#c4a265"/><rect x="1120.3" y="218.0" width="19" height="1.8" fill="#c4a265"/><rect x="1144.8" y="218.0" width="19.2" height="1.8" fill="#c4a265"/><rect x="1120.3" y="222.7" width="19" height="1.8" fill="#c4a265"/><rect x="1144.8" y="222.7" width="19.2" height="1.8" fill="#c4a265"/><rect x="1120.3" y="227.4" width="19" height="1.8" fill="#c4a265"/><rect x="1144.8" y="227.4" width="19.2" height="1.8" fill="#c4a265"/><rect x="1120.3" y="232.0" width="19" height="1.8" fill="#c4a265"/><rect x="1144.8" y="232.0" width="19.2" height="1.8" fill="#c4a265"/><rect x="1120.3" y="236.7" width="19" height="1.8" fill="#c4a265"/><rect x="1144.8" y="236.7" width="19.2" height="1.8" fill="#c4a265"/><rect x="1120.3" y="241.3" width="19" height="1.8" fill="#c4a265"/><rect x="1144.8" y="241.3" width="19.2" height="1.8" fill="#c4a265"/><rect x="1120.3" y="246.0" width="19" height="1.8" fill="#c4a265"/><rect x="1144.8" y="246.0" width="19.2" height="1.8" fill="#c4a265"/><rect x="1120.3" y="250.7" width="19" height="1.8" fill="#c4a265"/><rect x="1144.8" y="250.7" width="19.2" height="1.8" fill="#c4a265"/><rect x="1120.3" y="255.3" width="19" height="1.8" fill="#c4a265"/><rect x="1144.8" y="255.3" width="19.2" height="1.8" fill="#c4a265"/><rect x="1120.3" y="260.0" width="19" height="1.8" fill="#c4a265"/><rect x="1144.8" y="260.0" width="19.2" height="1.8" fill="#c4a265"/><rect x="1120.3" y="264.6" width="19" height="1.8" fill="#c4a265"/><rect x="1144.8" y="264.6" width="19.2" height="1.8" fill="#c4a265"/><rect x="1120.3" y="269.3" width="19" height="1.8" fill="#c4a265"/><rect x="1144.8" y="269.3" width="19.2" height="1.8" fill="#c4a265"/><line x1="1116" y1="345.3" x2="1136.5" y2="345.3" stroke="#2f2614" stroke-width="1"/><line x1="1146.3" y1="345.3" x2="1166.7" y2="345.3" stroke="#2f2614" stroke-width="1"/><line x1="1116" y1="369.3" x2="1136.5" y2="369.3" stroke="#2f2614" stroke-width="1"/><line x1="1146.3" y1="369.3" x2="1166.7" y2="369.3" stroke="#2f2614" stroke-width="1"/><line x1="1116" y1="391.6" x2="1136.5" y2="391.6" stroke="#2f2614" stroke-width="1"/><line x1="1146.3" y1="391.6" x2="1166.7" y2="391.6" stroke="#2f2614" stroke-width="1"/><line x1="1116" y1="411.2" x2="1136.5" y2="411.2" stroke="#2f2614" stroke-width="1"/><line x1="1146.3" y1="411.2" x2="1166.7" y2="411.2" stroke="#2f2614" stroke-width="1"/><line x1="1116" y1="429.3" x2="1136.5" y2="429.3" stroke="#2f2614" stroke-width="1"/><line x1="1146.3" y1="429.3" x2="1166.7" y2="429.3" stroke="#2f2614" stroke-width="1"/><line x1="1116" y1="461.2" x2="1136.5" y2="461.2" stroke="#2f2614" stroke-width="1"/><line x1="1146.3" y1="461.2" x2="1166.7" y2="461.2" stroke="#2f2614" stroke-width="1"/><line x1="1116" y1="486" x2="1136.5" y2="486" stroke="#2f2614" stroke-width="1"/><line x1="1146.3" y1="486" x2="1166.7" y2="486" stroke="#2f2614" stroke-width="1"/><line x1="1116" y1="507.2" x2="1136.5" y2="507.2" stroke="#2f2614" stroke-width="1"/><line x1="1146.3" y1="507.2" x2="1166.7" y2="507.2" stroke="#2f2614" stroke-width="1"/><line x1="1116" y1="532.9" x2="1136.5" y2="532.9" stroke="#2f2614" stroke-width="1"/><line x1="1146.3" y1="532.9" x2="1166.7" y2="532.9" stroke="#2f2614" stroke-width="1"/><line x1="1116" y1="548.8" x2="1136.5" y2="548.8" stroke="#2f2614" stroke-width="1"/><line x1="1146.3" y1="548.8" x2="1166.7" y2="548.8" stroke="#2f2614" stroke-width="1"/><line x1="1116" y1="560.6" x2="1136.5" y2="560.6" stroke="#2f2614" stroke-width="1"/><line x1="1146.3" y1="560.6" x2="1166.7" y2="560.6" stroke="#2f2614" stroke-width="1"/><line x1="1141.9" y1="344.3" x2="1141.9" y2="562.2" stroke="#0e0c08" stroke-width="2"/></svg>
<div class="t" style="left:66.0px;top:616.5px;font-size:11px;color:#cbbd8d;-webkit-text-stroke:0.2px #cbbd8d;transform:scaleX(0.85);transform-origin:left top">C2</div>
<div class="t" style="left:230.1px;top:616.5px;font-size:11px;color:#cbbd8d;-webkit-text-stroke:0.2px #cbbd8d;transform:scaleX(0.85);transform-origin:left top">C3</div>
<div class="t" style="left:394.2px;top:616.5px;font-size:11px;color:#cbbd8d;-webkit-text-stroke:0.2px #cbbd8d;transform:scaleX(0.85);transform-origin:left top">C4</div>
<div class="t" style="left:558.3px;top:616.5px;font-size:11px;color:#cbbd8d;-webkit-text-stroke:0.2px #cbbd8d;transform:scaleX(0.85);transform-origin:left top">C5</div>
<div class="t" style="left:722.3px;top:616.5px;font-size:11px;color:#cbbd8d;-webkit-text-stroke:0.2px #cbbd8d;transform:scaleX(0.85);transform-origin:left top">C6</div>
<div class="t" style="left:886.4px;top:616.5px;font-size:11px;color:#cbbd8d;-webkit-text-stroke:0.2px #cbbd8d;transform:scaleX(0.85);transform-origin:left top">C7</div>
<div class="t" style="left:1050.5px;top:616.5px;font-size:11px;color:#cbbd8d;-webkit-text-stroke:0.2px #cbbd8d;transform:scaleX(0.85);transform-origin:left top">C8</div>
<svg width="1200" height="674"><defs><clipPath id="kclip"><rect x="8" y="600" width="1184" height="60"/></clipPath></defs><g clip-path="url(#kclip)"><circle cx="-10.9" cy="641" r="9.5" fill="#eec477"/><circle cx="0.8" cy="621" r="9.2" fill="none" stroke="#cdbd8e" stroke-width="1.6"/><circle cx="12.5" cy="641" r="9.5" fill="#eec477"/><circle cx="24.2" cy="621" r="9.2" fill="none" stroke="#cdbd8e" stroke-width="1.6"/><circle cx="35.9" cy="641" r="9.5" fill="#eec477"/><circle cx="47.7" cy="621" r="9.2" fill="none" stroke="#cdbd8e" stroke-width="1.6"/><circle cx="59.4" cy="641" r="9.1" fill="#15171a" stroke="#d8c594" stroke-width="2"/><circle cx="59.4" cy="641" r="7" fill="#3cc8f2"/><circle cx="82.8" cy="641" r="9.1" fill="#15171a" stroke="#d8c594" stroke-width="2"/><circle cx="82.8" cy="641" r="7" fill="#3cc8f2"/><circle cx="94.5" cy="621" r="9.1" fill="#15171a" stroke="#d8c594" stroke-width="2"/><circle cx="94.5" cy="621" r="7" fill="#6466ee"/><circle cx="106.3" cy="641" r="9.1" fill="#15171a" stroke="#d8c594" stroke-width="2"/><circle cx="106.3" cy="641" r="7" fill="#9c4cf0"/><circle cx="118.0" cy="621" r="9.1" fill="#15171a" stroke="#d8c594" stroke-width="2"/><circle cx="118.0" cy="621" r="7" fill="#b97a14"/><circle cx="129.7" cy="641" r="9.1" fill="#15171a" stroke="#d8c594" stroke-width="2"/><circle cx="129.7" cy="641" r="7" fill="#e6d444"/><circle cx="153.1" cy="641" r="9.1" fill="#15171a" stroke="#d8c594" stroke-width="2"/><circle cx="153.1" cy="641" r="7" fill="#8ee6e0"/><circle cx="164.9" cy="621" r="9.1" fill="#15171a" stroke="#d8c594" stroke-width="2"/><circle cx="164.9" cy="621" r="7" fill="#e7b6ea"/><circle cx="176.6" cy="641" r="9.1" fill="#15171a" stroke="#d8c594" stroke-width="2"/><circle cx="176.6" cy="641" r="7" fill="#9ae25a"/><circle cx="188.3" cy="621" r="9.1" fill="#15171a" stroke="#d8c594" stroke-width="2"/><circle cx="188.3" cy="621" r="7" fill="#f2664f"/><circle cx="200.0" cy="641" r="9.1" fill="#15171a" stroke="#d8c594" stroke-width="2"/><circle cx="200.0" cy="641" r="7" fill="#e2523f"/><circle cx="211.7" cy="621" r="9.1" fill="#15171a" stroke="#d8c594" stroke-width="2"/><circle cx="211.7" cy="621" r="7" fill="#f0905a"/><circle cx="223.5" cy="641" r="9.1" fill="#15171a" stroke="#d8c594" stroke-width="2"/><circle cx="223.5" cy="641" r="7" fill="#e374d6"/><circle cx="246.9" cy="641" r="9.1" fill="#15171a" stroke="#d8c594" stroke-width="2"/><circle cx="246.9" cy="641" r="7" fill="#f0b416"/><circle cx="258.6" cy="621" r="9.1" fill="#15171a" stroke="#d8c594" stroke-width="2"/><circle cx="258.6" cy="621" r="7" fill="#8edf96"/><circle cx="270.3" cy="641" r="9.1" fill="#15171a" stroke="#d8c594" stroke-width="2"/><circle cx="270.3" cy="641" r="7" fill="#4591d4"/><circle cx="282.1" cy="621" r="9.1" fill="#15171a" stroke="#d8c594" stroke-width="2"/><circle cx="282.1" cy="621" r="7" fill="#4a8f5e"/><circle cx="293.8" cy="641" r="9.1" fill="#15171a" stroke="#d8c594" stroke-width="2"/><circle cx="293.8" cy="641" r="7" fill="#a28a5c"/><circle cx="317.2" cy="641" r="9.1" fill="#15171a" stroke="#d8c594" stroke-width="2"/><circle cx="317.2" cy="641" r="7" fill="#bc8fe0"/><circle cx="328.9" cy="621" r="9.1" fill="#15171a" stroke="#d8c594" stroke-width="2"/><circle cx="328.9" cy="621" r="7" fill="#c49a9a"/><path d="M323.84 622.57 L325.54 622.57 C326.05 622.57 326.05 618.15 326.73 618.15 C327.58 618.15 328.09 623.42 328.94 623.42 C329.79 623.42 330.30 618.15 331.15 618.15 C331.83 618.15 331.83 622.57 332.34 622.57 L334.04 622.57" fill="none" stroke="#3a2a2a" stroke-width="1.3" stroke-linejoin="round" stroke-linecap="round"/><circle cx="340.7" cy="641" r="9.1" fill="#15171a" stroke="#d8c594" stroke-width="2"/><circle cx="340.7" cy="641" r="7" fill="#c49a9a"/><path d="M335.56 642.57 L337.26 642.57 C337.77 642.57 337.77 638.15 338.45 638.15 C339.30 638.15 339.81 643.42 340.66 643.42 C341.51 643.42 342.02 638.15 342.87 638.15 C343.55 638.15 343.55 642.57 344.06 642.57 L345.76 642.57" fill="none" stroke="#3a2a2a" stroke-width="1.3" stroke-linejoin="round" stroke-linecap="round"/><circle cx="352.4" cy="621" r="9.1" fill="#15171a" stroke="#d8c594" stroke-width="2"/><circle cx="352.4" cy="621" r="7" fill="#3fb2b4"/><circle cx="364.1" cy="641" r="9.1" fill="#15171a" stroke="#d8c594" stroke-width="2"/><circle cx="364.1" cy="641" r="7" fill="#8a3cf2"/><circle cx="375.8" cy="621" r="9.1" fill="#15171a" stroke="#d8c594" stroke-width="2"/><circle cx="375.8" cy="621" r="7" fill="#e8d444"/><circle cx="387.5" cy="641" r="9.1" fill="#15171a" stroke="#d8c594" stroke-width="2"/><circle cx="387.5" cy="641" r="7" fill="#e2ea90"/><path d="M382.44 642.57 L384.14 642.57 C384.65 642.57 384.65 638.15 385.33 638.15 C386.18 638.15 386.69 643.42 387.54 643.42 C388.39 643.42 388.90 638.15 389.75 638.15 C390.43 638.15 390.43 642.57 390.94 642.57 L392.64 642.57" fill="none" stroke="#1a1a14" stroke-width="1.3" stroke-linejoin="round" stroke-linecap="round"/><circle cx="411.0" cy="641" r="9.1" fill="#16181a" stroke="#f4f4f0" stroke-width="2"/><circle cx="411.0" cy="641" r="7" fill="#e2ea90"/><path d="M405.88 642.57 L407.58 642.57 C408.09 642.57 408.09 638.15 408.77 638.15 C409.62 638.15 410.13 643.42 410.98 643.42 C411.83 643.42 412.34 638.15 413.19 638.15 C413.87 638.15 413.87 642.57 414.38 642.57 L416.08 642.57" fill="none" stroke="#1a1a14" stroke-width="1.3" stroke-linejoin="round" stroke-linecap="round"/><ellipse cx="411.0" cy="641.2" rx="2.2" ry="2.8" fill="#ffffff"/><circle cx="422.7" cy="621" r="9.1" fill="#15171a" stroke="#d8c594" stroke-width="2"/><circle cx="422.7" cy="621" r="7" fill="#e2ea90"/><path d="M417.60 622.57 L419.30 622.57 C419.81 622.57 419.81 618.15 420.49 618.15 C421.34 618.15 421.85 623.42 422.70 623.42 C423.55 623.42 424.06 618.15 424.91 618.15 C425.59 618.15 425.59 622.57 426.10 622.57 L427.80 622.57" fill="none" stroke="#1a1a14" stroke-width="1.3" stroke-linejoin="round" stroke-linecap="round"/><circle cx="434.4" cy="641" r="9.1" fill="#15171a" stroke="#d8c594" stroke-width="2"/><circle cx="434.4" cy="641" r="7" fill="#e2ea90"/><path d="M429.32 642.57 L431.02 642.57 C431.53 642.57 431.53 638.15 432.21 638.15 C433.06 638.15 433.57 643.42 434.42 643.42 C435.27 643.42 435.78 638.15 436.63 638.15 C437.31 638.15 437.31 642.57 437.82 642.57 L439.52 642.57" fill="none" stroke="#1a1a14" stroke-width="1.3" stroke-linejoin="round" stroke-linecap="round"/><circle cx="446.1" cy="621" r="9.1" fill="#15171a" stroke="#d8c594" stroke-width="2"/><circle cx="446.1" cy="621" r="7" fill="#e2ea90"/><path d="M441.04 622.57 L442.74 622.57 C443.25 622.57 443.25 618.15 443.93 618.15 C444.78 618.15 445.29 623.42 446.14 623.42 C446.99 623.42 447.50 618.15 448.35 618.15 C449.03 618.15 449.03 622.57 449.54 622.57 L451.24 622.57" fill="none" stroke="#1a1a14" stroke-width="1.3" stroke-linejoin="round" stroke-linecap="round"/><circle cx="457.9" cy="641" r="9.1" fill="#15171a" stroke="#d8c594" stroke-width="2"/><circle cx="457.9" cy="641" r="7" fill="#e2ea90"/><path d="M452.76 642.57 L454.46 642.57 C454.97 642.57 454.97 638.15 455.65 638.15 C456.50 638.15 457.01 643.42 457.86 643.42 C458.71 643.42 459.22 638.15 460.07 638.15 C460.75 638.15 460.75 642.57 461.26 642.57 L462.96 642.57" fill="none" stroke="#1a1a14" stroke-width="1.3" stroke-linejoin="round" stroke-linecap="round"/><circle cx="481.3" cy="641" r="9.1" fill="#15171a" stroke="#d8c594" stroke-width="2"/><circle cx="481.3" cy="641" r="7" fill="#e2ea90"/><path d="M476.20 642.57 L477.90 642.57 C478.41 642.57 478.41 638.15 479.09 638.15 C479.94 638.15 480.45 643.42 481.30 643.42 C482.15 643.42 482.66 638.15 483.51 638.15 C484.19 638.15 484.19 642.57 484.70 642.57 L486.40 642.57" fill="none" stroke="#1a1a14" stroke-width="1.3" stroke-linejoin="round" stroke-linecap="round"/><circle cx="493.0" cy="621" r="9.1" fill="#15171a" stroke="#d8c594" stroke-width="2"/><circle cx="493.0" cy="621" r="7" fill="#e2ea90"/><path d="M487.92 622.57 L489.62 622.57 C490.13 622.57 490.13 618.15 490.81 618.15 C491.66 618.15 492.17 623.42 493.02 623.42 C493.87 623.42 494.38 618.15 495.23 618.15 C495.91 618.15 495.91 622.57 496.42 622.57 L498.12 622.57" fill="none" stroke="#1a1a14" stroke-width="1.3" stroke-linejoin="round" stroke-linecap="round"/><circle cx="504.7" cy="641" r="9.1" fill="#15171a" stroke="#d8c594" stroke-width="2"/><circle cx="504.7" cy="641" r="7" fill="#e2ea90"/><path d="M499.64 642.57 L501.34 642.57 C501.85 642.57 501.85 638.15 502.53 638.15 C503.38 638.15 503.89 643.42 504.74 643.42 C505.59 643.42 506.10 638.15 506.95 638.15 C507.63 638.15 507.63 642.57 508.14 642.57 L509.84 642.57" fill="none" stroke="#1a1a14" stroke-width="1.3" stroke-linejoin="round" stroke-linecap="round"/><circle cx="516.5" cy="621" r="9.1" fill="#15171a" stroke="#d8c594" stroke-width="2"/><circle cx="516.5" cy="621" r="7" fill="#e2ea90"/><path d="M511.36 622.57 L513.06 622.57 C513.57 622.57 513.57 618.15 514.25 618.15 C515.10 618.15 515.61 623.42 516.46 623.42 C517.31 623.42 517.82 618.15 518.67 618.15 C519.35 618.15 519.35 622.57 519.86 622.57 L521.56 622.57" fill="none" stroke="#1a1a14" stroke-width="1.3" stroke-linejoin="round" stroke-linecap="round"/><circle cx="528.2" cy="641" r="9.5" fill="#eec477"/><circle cx="539.9" cy="621" r="9.2" fill="none" stroke="#cdbd8e" stroke-width="1.6"/><circle cx="551.6" cy="641" r="9.5" fill="#eec477"/><circle cx="575.1" cy="641" r="9.5" fill="#eec477"/><circle cx="586.8" cy="621" r="9.2" fill="none" stroke="#cdbd8e" stroke-width="1.6"/><circle cx="598.5" cy="641" r="9.5" fill="#eec477"/><circle cx="610.2" cy="621" r="9.2" fill="none" stroke="#cdbd8e" stroke-width="1.6"/><circle cx="621.9" cy="641" r="9.5" fill="#eec477"/><circle cx="645.4" cy="641" r="9.5" fill="#eec477"/><circle cx="657.1" cy="621" r="9.2" fill="none" stroke="#cdbd8e" stroke-width="1.6"/><circle cx="668.8" cy="641" r="9.5" fill="#eec477"/><circle cx="680.5" cy="621" r="9.2" fill="none" stroke="#cdbd8e" stroke-width="1.6"/><circle cx="692.3" cy="641" r="9.5" fill="#eec477"/><circle cx="704.0" cy="621" r="9.2" fill="none" stroke="#cdbd8e" stroke-width="1.6"/><circle cx="715.7" cy="641" r="9.5" fill="#eec477"/><circle cx="739.1" cy="641" r="9.5" fill="#eec477"/><circle cx="750.9" cy="621" r="9.2" fill="none" stroke="#cdbd8e" stroke-width="1.6"/><circle cx="762.6" cy="641" r="9.5" fill="#eec477"/><circle cx="774.3" cy="621" r="9.2" fill="none" stroke="#cdbd8e" stroke-width="1.6"/><circle cx="786.0" cy="641" r="9.5" fill="#eec477"/><circle cx="809.5" cy="641" r="9.5" fill="#eec477"/><circle cx="821.2" cy="621" r="9.2" fill="none" stroke="#cdbd8e" stroke-width="1.6"/><circle cx="832.9" cy="641" r="9.5" fill="#eec477"/><circle cx="844.6" cy="621" r="9.2" fill="none" stroke="#cdbd8e" stroke-width="1.6"/><circle cx="856.3" cy="641" r="9.5" fill="#eec477"/><circle cx="868.1" cy="621" r="9.2" fill="none" stroke="#cdbd8e" stroke-width="1.6"/><circle cx="879.8" cy="641" r="9.5" fill="#eec477"/><circle cx="903.2" cy="641" r="9.5" fill="#eec477"/><circle cx="914.9" cy="621" r="9.2" fill="none" stroke="#cdbd8e" stroke-width="1.6"/><circle cx="926.7" cy="641" r="9.5" fill="#eec477"/><circle cx="938.4" cy="621" r="9.2" fill="none" stroke="#cdbd8e" stroke-width="1.6"/><circle cx="950.1" cy="641" r="9.5" fill="#eec477"/><circle cx="973.5" cy="641" r="9.5" fill="#eec477"/><circle cx="985.3" cy="621" r="9.2" fill="none" stroke="#cdbd8e" stroke-width="1.6"/><circle cx="997.0" cy="641" r="9.5" fill="#eec477"/><circle cx="1008.7" cy="621" r="9.2" fill="none" stroke="#cdbd8e" stroke-width="1.6"/><circle cx="1020.4" cy="641" r="9.5" fill="#eec477"/><circle cx="1032.1" cy="621" r="9.2" fill="none" stroke="#cdbd8e" stroke-width="1.6"/><circle cx="1043.9" cy="641" r="9.5" fill="#eec477"/><circle cx="1067.3" cy="641" r="9.5" fill="#eec477"/><circle cx="1079.0" cy="621" r="9.2" fill="none" stroke="#cdbd8e" stroke-width="1.6"/><circle cx="1090.7" cy="641" r="9.5" fill="#eec477"/><circle cx="1102.5" cy="621" r="9.2" fill="none" stroke="#cdbd8e" stroke-width="1.6"/><circle cx="1114.2" cy="641" r="9.5" fill="#eec477"/><circle cx="1137.6" cy="641" r="9.5" fill="#eec477"/><circle cx="1149.3" cy="621" r="9.2" fill="none" stroke="#cdbd8e" stroke-width="1.6"/><circle cx="1161.1" cy="641" r="9.5" fill="#eec477"/><circle cx="1172.8" cy="621" r="9.2" fill="none" stroke="#cdbd8e" stroke-width="1.6"/><circle cx="1184.5" cy="641" r="9.5" fill="#eec477"/><circle cx="1196.2" cy="621" r="9.2" fill="none" stroke="#cdbd8e" stroke-width="1.6"/><circle cx="1207.9" cy="641" r="9.5" fill="#eec477"/></g><path d="M66.6 628 H74.8 L77.8 631.8" fill="none" stroke="#b9ab80" stroke-width="1"/><path d="M230.7 628 H238.9 L241.9 631.8" fill="none" stroke="#b9ab80" stroke-width="1"/><path d="M394.8 628 H403.0 L406.0 631.8" fill="none" stroke="#b9ab80" stroke-width="1"/><path d="M558.9 628 H567.1 L570.1 631.8" fill="none" stroke="#b9ab80" stroke-width="1"/><path d="M722.9 628 H731.1 L734.1 631.8" fill="none" stroke="#b9ab80" stroke-width="1"/><path d="M887.0 628 H895.2 L898.2 631.8" fill="none" stroke="#b9ab80" stroke-width="1"/><path d="M1051.1 628 H1059.3 L1062.3 631.8" fill="none" stroke="#b9ab80" stroke-width="1"/><rect x="9" y="659.8" width="1182" height="6.2" rx="3.1" fill="none" stroke="#bfc7ce" stroke-width="2"/><rect x="300" y="661.9" width="790" height="2.3" rx="1.15" fill="#ffffff"/></svg>
</body></html>
